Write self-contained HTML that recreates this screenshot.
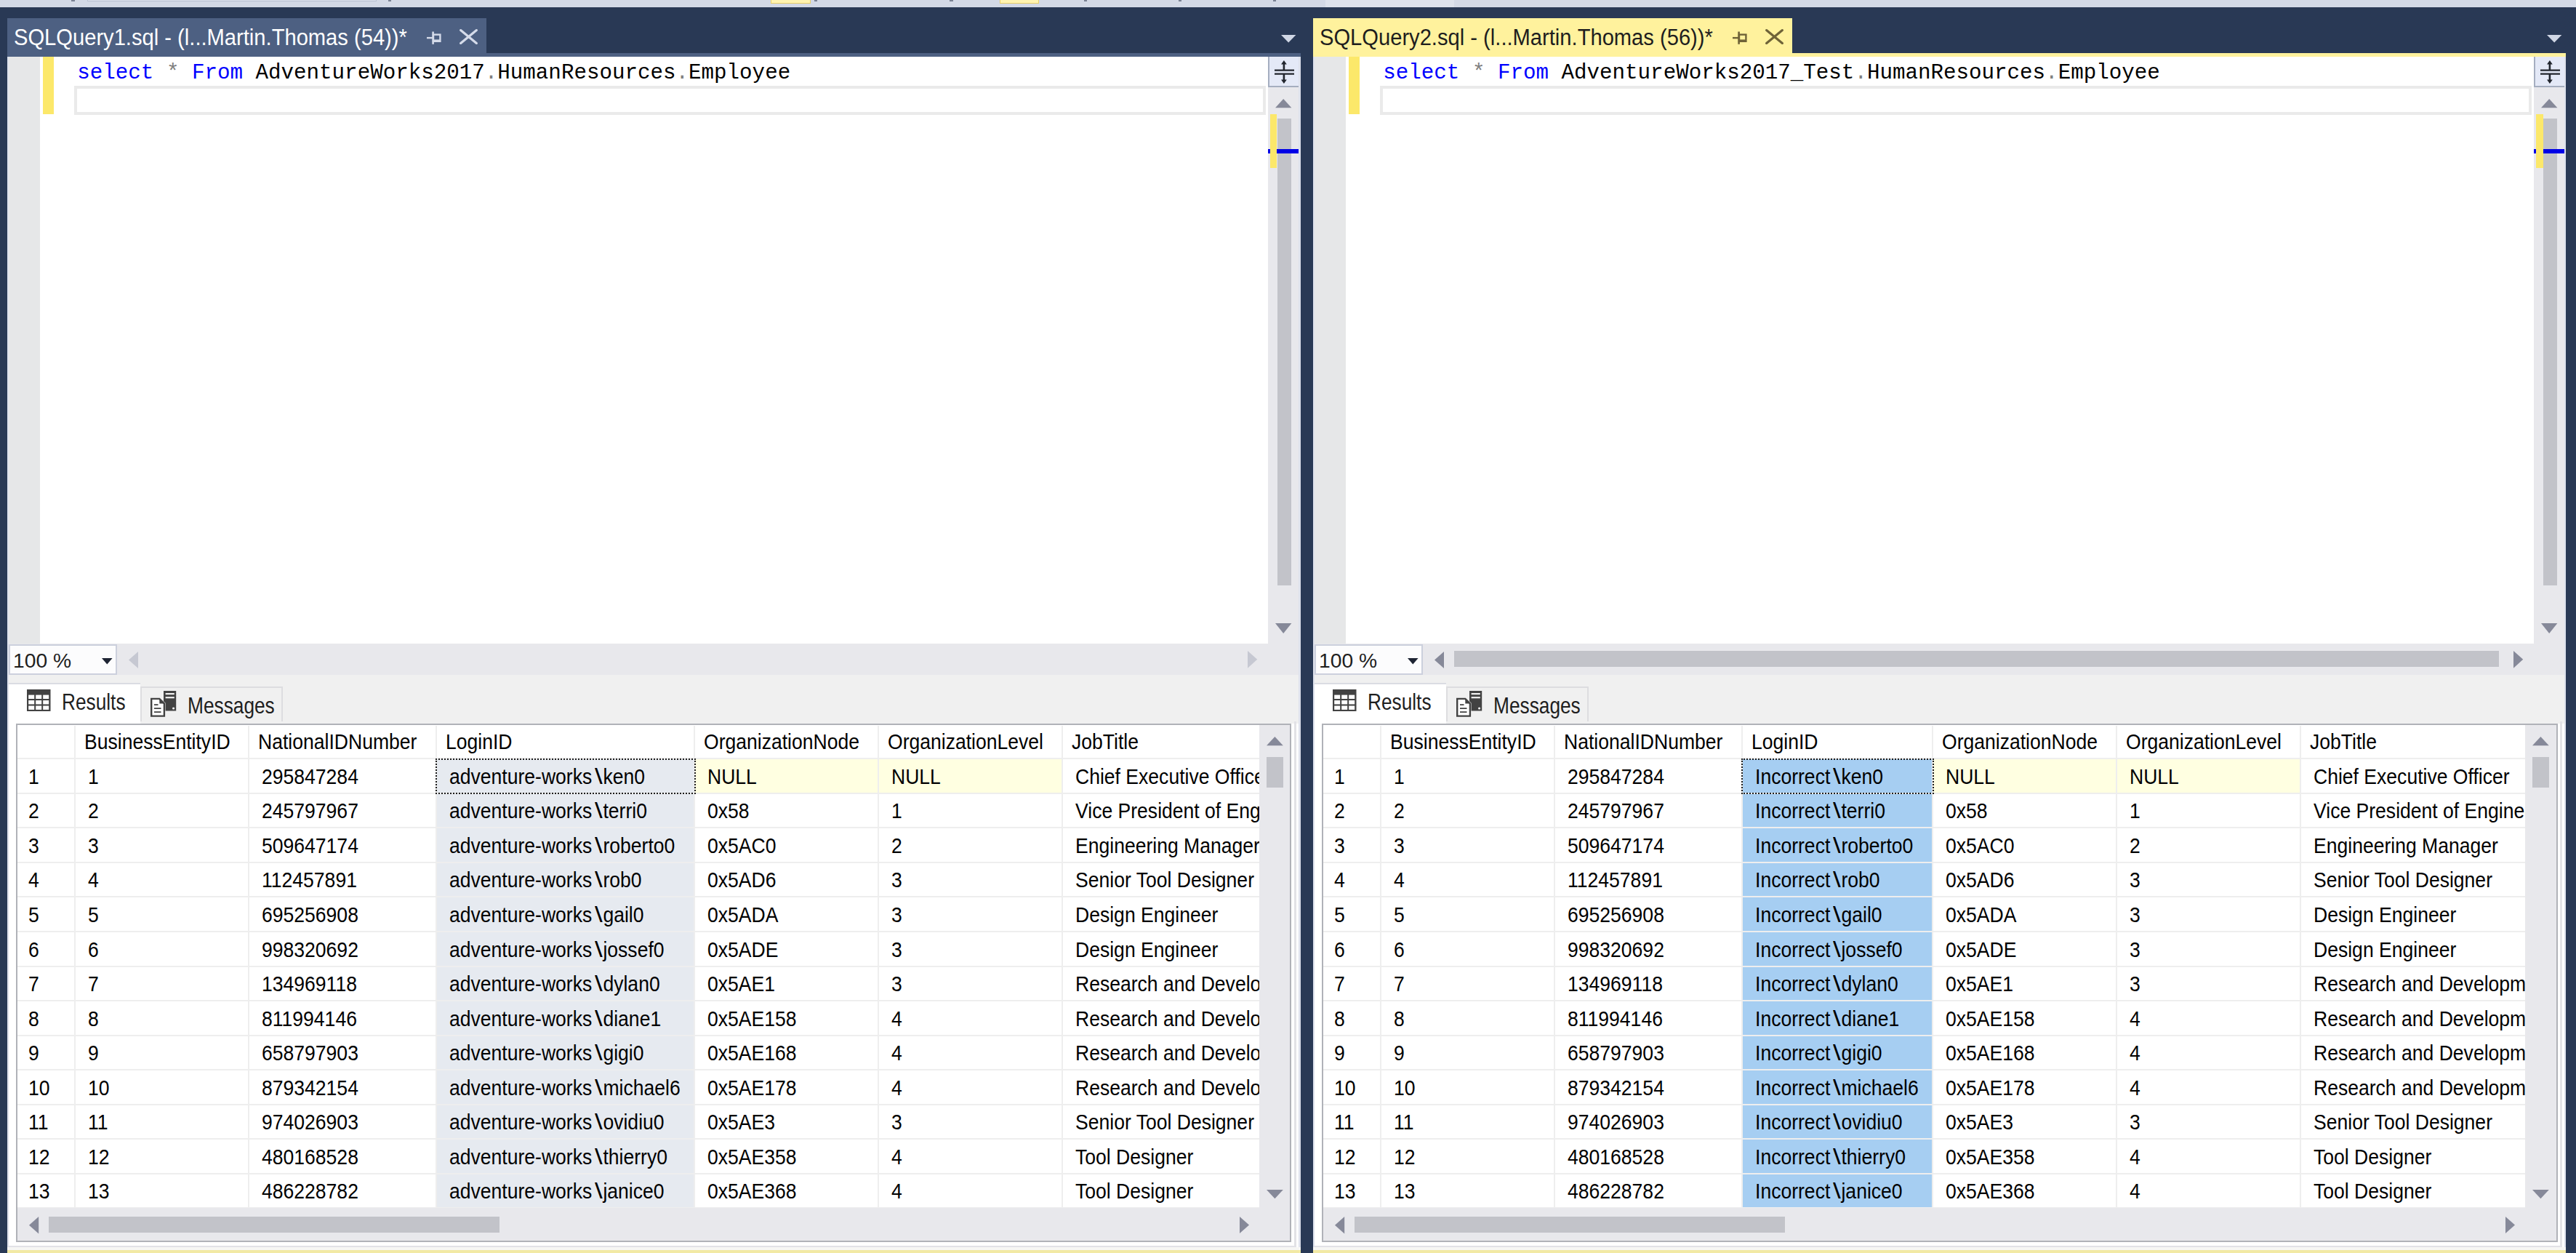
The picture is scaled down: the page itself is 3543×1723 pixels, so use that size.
<!DOCTYPE html>
<html><head><meta charset="utf-8"><title>SSMS</title>
<style>
html,body{margin:0;padding:0;width:3543px;height:1723px;overflow:hidden;background:#293955;}
body>div,body>svg,body div{position:absolute;}
body>svg{position:absolute;overflow:visible}
</style></head><body>

<div style="left:0.00px;top:0.00px;width:3543.00px;height:1723.00px;background:#293955;"></div>
<div style="left:0.00px;top:0.00px;width:3543.00px;height:10.40px;background:#D3D9E6;"></div>
<div style="left:120.00px;top:-2.00px;width:398.00px;height:3.80px;background:#DCE1EC;box-sizing:border-box;border:1.4px solid #B9C2D3;border-top:none;"></div>
<div style="left:1060.00px;top:-2.00px;width:54.50px;height:7.20px;background:#FFF3B0;box-sizing:border-box;border:1.8px solid #E8CF6A;border-top:none;"></div>
<div style="left:1374.60px;top:-2.00px;width:54.40px;height:7.20px;background:#FFF3B0;box-sizing:border-box;border:1.8px solid #E8CF6A;border-top:none;"></div>
<div style="left:1823.00px;top:0.00px;width:177.00px;height:10.40px;background:#DDE2EC;"></div>
<div style="left:98.30px;top:0.00px;width:4.40px;height:2.20px;background:#7A8294;"></div>
<div style="left:533.50px;top:0.00px;width:4.40px;height:2.20px;background:#7A8294;"></div>
<div style="left:1119.80px;top:0.00px;width:4.40px;height:2.20px;background:#7A8294;"></div>
<div style="left:1306.40px;top:0.00px;width:4.40px;height:2.20px;background:#7A8294;"></div>
<div style="left:1490.80px;top:0.00px;width:4.40px;height:2.20px;background:#7A8294;"></div>
<div style="left:1620.80px;top:0.00px;width:4.40px;height:2.20px;background:#7A8294;"></div>
<div style="left:1750.80px;top:0.00px;width:4.40px;height:2.20px;background:#7A8294;"></div>
<div style="left:10.00px;top:73.00px;width:1779.00px;height:1650.00px;background:#DDE1EC;"></div>
<div style="left:9.50px;top:25.40px;width:659.50px;height:47.60px;background:#4D6082;"></div>
<div style="left:10.00px;top:73.00px;width:1779.00px;height:5.00px;background:#4D6082;"></div>
<div style="left:19.00px;top:34.24px;font-family:'Liberation Sans',sans-serif;font-size:31px;line-height:35.65px;color:#FFFFFF;white-space:pre;transform:scaleX(0.94);transform-origin:0 0;">SQLQuery1.sql - (l...Martin.Thomas (54))*</div>
<svg style="left:586.50px;top:42.50px" width="22.00" height="19.00" viewBox="0 0 22.00 19.00"><path d="M0 9.1 H8" stroke="#D5DBEA" stroke-width="2.4"/><path d="M8.6 0.5 V17.8" stroke="#D5DBEA" stroke-width="2.6"/><rect x="9" y="4.6" width="9.4" height="9.2" fill="none" stroke="#D5DBEA" stroke-width="2.4"/><rect x="9" y="11.4" width="9.4" height="3.2" fill="#D5DBEA"/></svg>
<svg style="left:631.80px;top:39.80px" width="25.00" height="21.00" viewBox="0 0 25.00 21.00"><path d="M1.6 1.6 L23.4 19.4 M23.4 1.6 L1.6 19.4" stroke="#D5DBEA" stroke-width="3.2" stroke-linecap="round"/></svg>
<svg style="left:1761.70px;top:48.20px" width="20.40" height="10.40" viewBox="0 0 20.40 10.40"><polygon points="0,0 20.399999999999864,0 10.199999999999932,10.399999999999999" fill="#D0D7E5"/></svg>
<div style="left:12.00px;top:78.00px;width:1774.00px;height:807.30px;background:#FFFFFF;"></div>
<div style="left:12.00px;top:78.00px;width:42.50px;height:807.30px;background:#E6E7E8;"></div>
<div style="left:59.20px;top:78.00px;width:14.80px;height:79.20px;background:#FCE86A;"></div>
<div style="left:101.50px;top:117.50px;width:1639.20px;height:40.80px;background:transparent;box-sizing:border-box;border:4.8px solid #EAEAEA;"></div>
<div style="left:106.30px;top:83.68px;font-family:'Liberation Mono',monospace;font-size:29.2px;line-height:33.58px;color:#000;white-space:pre;"><span style="color:#0000FF">select</span> <span style="color:#808080">*</span> <span style="color:#0000FF">From</span> AdventureWorks2017<span style="color:#808080">.</span>HumanResources<span style="color:#808080">.</span>Employee</div>
<div style="left:1744.00px;top:78.00px;width:42.00px;height:807.30px;background:#E8E8EC;"></div>
<div style="left:1744.00px;top:78.00px;width:42.00px;height:42.00px;background:#E4E9F7;box-sizing:border-box;border-left:2.2px solid #A5AEC0;border-bottom:2.4px solid #A5AEC0;"></div>
<svg style="left:1752.00px;top:82.00px" width="30.00" height="34.00" viewBox="0 0 30.00 34.00"><path d="M1 14.6 H28 M1 19.6 H28" stroke="#22262E" stroke-width="2.4"/><path d="M13.9 4.5 V14.6 M13.9 19.6 V29" stroke="#22262E" stroke-width="2.6"/><polygon points="10,6.5 17.8,6.5 13.9,1" fill="#22262E"/><polygon points="10,27.5 17.8,27.5 13.9,33" fill="#22262E"/></svg>
<svg style="left:1754.00px;top:135.60px" width="22.40" height="12.30" viewBox="0 0 22.40 12.30"><polygon points="0,12.300000000000011 22.40000000000009,12.300000000000011 11.200000000000045,0" fill="#868999"/></svg>
<div style="left:1757.00px;top:162.80px;width:19.20px;height:642.60px;background:#C2C3C9;"></div>
<div style="left:1744.00px;top:205.30px;width:42.00px;height:5.70px;background:#0000E6;"></div>
<div style="left:1746.50px;top:157.30px;width:9.80px;height:73.70px;background:#FCE86A;"></div>
<svg style="left:1754.00px;top:857.20px" width="22.40" height="14.00" viewBox="0 0 22.40 14.00"><polygon points="0,0 22.40000000000009,0 11.200000000000045,14.0" fill="#868999"/></svg>
<div style="left:12.00px;top:885.30px;width:1774.00px;height:42.30px;background:#E8E8EC;"></div>
<div style="left:12.00px;top:886.00px;width:149.00px;height:41.70px;background:#FCFCFD;box-sizing:border-box;border:2.3px solid #CCD0DD;"></div>
<div style="left:17.50px;top:891.91px;font-family:'Liberation Sans',sans-serif;font-size:28.5px;line-height:32.77px;color:#1E1E1E;white-space:pre;transform:scaleX(0.99);transform-origin:0 0;">100 %</div>
<svg style="left:140.00px;top:904.80px" width="14.60" height="8.40" viewBox="0 0 14.60 8.40"><polygon points="0,0 14.599999999999994,0 7.299999999999997,8.400000000000091" fill="#1E2433"/></svg>
<svg style="left:177.00px;top:895.50px" width="13.00" height="23.00" viewBox="0 0 13.00 23.00"><polygon points="13,0 13,23.0 0,11.5" fill="#C6C8D2"/></svg>
<svg style="left:1716.00px;top:895.30px" width="13.20" height="23.70" viewBox="0 0 13.20 23.70"><polygon points="0,0 0,23.700000000000045 13.200000000000045,11.850000000000023" fill="#C6C8D2"/></svg>
<div style="left:12.00px;top:927.60px;width:1774.00px;height:67.40px;background:#F0F0F0;"></div>
<div style="left:12.00px;top:995.00px;width:1774.00px;height:720.00px;background:#FFFFFF;"></div>
<div style="left:12.00px;top:938.60px;width:180.50px;height:56.40px;background:#FFFFFF;box-sizing:border-box;border-top:2px solid #DADCE3;"></div>
<div style="left:192.50px;top:943.60px;width:196.50px;height:48.40px;background:#F0F0F0;box-sizing:border-box;border:2px solid #DDDDE0;border-bottom:none;"></div>
<svg style="left:37.00px;top:947.80px" width="32.50" height="30.00" viewBox="0 0 32.50 30.00"><rect x="0" y="0" width="32.5" height="30" fill="#424242"/><rect x="2.2" y="7.6" width="8" height="5.4" fill="#FFFFFF"/><rect x="12.2" y="7.6" width="8" height="5.4" fill="#FFFFFF"/><rect x="22.2" y="7.6" width="8" height="5.4" fill="#FFFFFF"/><rect x="2.2" y="15.05" width="8" height="5.4" fill="#FFFFFF"/><rect x="12.2" y="15.05" width="8" height="5.4" fill="#FFFFFF"/><rect x="22.2" y="15.05" width="8" height="5.4" fill="#FFFFFF"/><rect x="2.2" y="22.5" width="8" height="5.4" fill="#FFFFFF"/><rect x="12.2" y="22.5" width="8" height="5.4" fill="#FFFFFF"/><rect x="22.2" y="22.5" width="8" height="5.4" fill="#FFFFFF"/></svg>
<div style="left:85.00px;top:947.09px;font-family:'Liberation Sans',sans-serif;font-size:31.5px;line-height:36.22px;color:#1E1E1E;white-space:pre;transform:scaleX(0.833);transform-origin:0 0;">Results</div>
<svg style="left:206.80px;top:950.20px" width="36.00" height="36.00" viewBox="0 0 36.00 36.00"><rect x="18" y="0" width="17.2" height="27.5" fill="#424242"/><rect x="20.6" y="3" width="12.2" height="2.2" fill="#F0F0F0"/><rect x="20.6" y="8.1" width="12.2" height="2.2" fill="#F0F0F0"/><circle cx="31.6" cy="24" r="1.6" fill="#F0F0F0"/><path d="M-0.5 9.2 H13 L20.6 16.8 V36.3 H-0.5 Z" fill="#F0F0F0"/><path d="M1.2 10.9 H12.3 L18.9 17.5 V34.6 H1.2 Z" fill="#FFFFFF" stroke="#424242" stroke-width="2.4"/><path d="M12.3 10.9 V17.5 H18.9" fill="#424242"/><path d="M5 19.2 H10.5 M5 24.2 H14.5 M5 29.2 H14.5" stroke="#424242" stroke-width="1.8"/></svg>
<div style="left:257.80px;top:951.99px;font-family:'Liberation Sans',sans-serif;font-size:31.5px;line-height:36.22px;color:#1E1E1E;white-space:pre;transform:scaleX(0.834);transform-origin:0 0;">Messages</div>
<div style="left:1780.00px;top:992.00px;width:3.00px;height:723.00px;background:#E2E2E6;"></div>
<div style="left:12.00px;top:1712.60px;width:1771.00px;height:2.20px;background:#E2E2E6;"></div>
<div style="left:10.00px;top:1714.80px;width:1779.00px;height:3.90px;background:#F6F6F4;"></div>
<div style="left:10.00px;top:1718.70px;width:1779.00px;height:4.30px;background:#F2E9A4;"></div>
<div style="left:22.00px;top:995.40px;width:1754.40px;height:712.20px;background:#FFFFFF;"></div>
<div style="left:600.30px;top:1043.20px;width:354.70px;height:618.15px;background:#E6EAF0;"></div>
<div style="left:955.00px;top:1043.20px;width:505.90px;height:47.55px;background:#FFFFE1;"></div>
<div style="left:24.30px;top:1042.20px;width:1707.70px;height:2.00px;background:#EEEEEE;"></div>
<div style="left:24.30px;top:1089.75px;width:1707.70px;height:2.00px;background:#EEEEEE;"></div>
<div style="left:24.30px;top:1137.30px;width:1707.70px;height:2.00px;background:#EEEEEE;"></div>
<div style="left:24.30px;top:1184.85px;width:1707.70px;height:2.00px;background:#EEEEEE;"></div>
<div style="left:24.30px;top:1232.40px;width:1707.70px;height:2.00px;background:#EEEEEE;"></div>
<div style="left:24.30px;top:1279.95px;width:1707.70px;height:2.00px;background:#EEEEEE;"></div>
<div style="left:24.30px;top:1327.50px;width:1707.70px;height:2.00px;background:#EEEEEE;"></div>
<div style="left:24.30px;top:1375.05px;width:1707.70px;height:2.00px;background:#EEEEEE;"></div>
<div style="left:24.30px;top:1422.60px;width:1707.70px;height:2.00px;background:#EEEEEE;"></div>
<div style="left:24.30px;top:1470.15px;width:1707.70px;height:2.00px;background:#EEEEEE;"></div>
<div style="left:24.30px;top:1517.70px;width:1707.70px;height:2.00px;background:#EEEEEE;"></div>
<div style="left:24.30px;top:1565.25px;width:1707.70px;height:2.00px;background:#EEEEEE;"></div>
<div style="left:24.30px;top:1612.80px;width:1707.70px;height:2.00px;background:#EEEEEE;"></div>
<div style="left:24.30px;top:1660.35px;width:1707.70px;height:2.00px;background:#EEEEEE;"></div>
<div style="left:101.50px;top:997.70px;width:2.00px;height:663.65px;background:#EEEEEE;"></div>
<div style="left:341.00px;top:997.70px;width:2.00px;height:663.65px;background:#EEEEEE;"></div>
<div style="left:599.30px;top:997.70px;width:2.00px;height:663.65px;background:#EEEEEE;"></div>
<div style="left:954.00px;top:997.70px;width:2.00px;height:663.65px;background:#EEEEEE;"></div>
<div style="left:1206.60px;top:997.70px;width:2.00px;height:663.65px;background:#EEEEEE;"></div>
<div style="left:1459.90px;top:997.70px;width:2.00px;height:663.65px;background:#EEEEEE;"></div>
<div style="left:102.50px;top:997.70px;width:239.50px;height:663.65px;overflow:hidden"><div style="left:13.00px;top:5.65px;font-family:'Liberation Sans',sans-serif;font-size:30px;line-height:34px;color:#000;white-space:pre;transform:scaleX(0.885);transform-origin:0 0">BusinessEntityID</div></div>
<div style="left:342.00px;top:997.70px;width:258.30px;height:663.65px;overflow:hidden"><div style="left:13.00px;top:5.65px;font-family:'Liberation Sans',sans-serif;font-size:30px;line-height:34px;color:#000;white-space:pre;transform:scaleX(0.885);transform-origin:0 0">NationalIDNumber</div></div>
<div style="left:600.30px;top:997.70px;width:354.70px;height:663.65px;overflow:hidden"><div style="left:13.00px;top:5.65px;font-family:'Liberation Sans',sans-serif;font-size:30px;line-height:34px;color:#000;white-space:pre;transform:scaleX(0.885);transform-origin:0 0">LoginID</div></div>
<div style="left:955.00px;top:997.70px;width:252.60px;height:663.65px;overflow:hidden"><div style="left:13.00px;top:5.65px;font-family:'Liberation Sans',sans-serif;font-size:30px;line-height:34px;color:#000;white-space:pre;transform:scaleX(0.885);transform-origin:0 0">OrganizationNode</div></div>
<div style="left:1207.60px;top:997.70px;width:253.30px;height:663.65px;overflow:hidden"><div style="left:13.00px;top:5.65px;font-family:'Liberation Sans',sans-serif;font-size:30px;line-height:34px;color:#000;white-space:pre;transform:scaleX(0.885);transform-origin:0 0">OrganizationLevel</div></div>
<div style="left:1460.90px;top:997.70px;width:271.10px;height:663.65px;overflow:hidden"><div style="left:13.00px;top:5.65px;font-family:'Liberation Sans',sans-serif;font-size:30px;line-height:34px;color:#000;white-space:pre;transform:scaleX(0.885);transform-origin:0 0">JobTitle</div></div>
<div style="left:24.30px;top:997.70px;width:78.20px;height:663.65px;overflow:hidden"><div style="left:15.00px;top:53.15px;font-family:'Liberation Sans',sans-serif;font-size:30px;line-height:34px;color:#000;white-space:pre;transform:scaleX(0.885);transform-origin:0 0">1</div></div>
<div style="left:102.50px;top:997.70px;width:239.50px;height:663.65px;overflow:hidden"><div style="left:18.00px;top:53.15px;font-family:'Liberation Sans',sans-serif;font-size:30px;line-height:34px;color:#000;white-space:pre;transform:scaleX(0.885);transform-origin:0 0">1</div></div>
<div style="left:342.00px;top:997.70px;width:258.30px;height:663.65px;overflow:hidden"><div style="left:18.00px;top:53.15px;font-family:'Liberation Sans',sans-serif;font-size:30px;line-height:34px;color:#000;white-space:pre;transform:scaleX(0.885);transform-origin:0 0">295847284</div></div>
<div style="left:600.30px;top:997.70px;width:354.70px;height:663.65px;overflow:hidden"><div style="left:18.00px;top:53.15px;font-family:'Liberation Sans',sans-serif;font-size:30px;line-height:34px;color:#000;white-space:pre;transform:scaleX(0.885);transform-origin:0 0">adventure-works<span style="position:static;display:inline-block;margin:0 4.8px 0 4px;transform:scaleX(1.45);transform-origin:0 0">\</span>ken0</div></div>
<div style="left:955.00px;top:997.70px;width:252.60px;height:663.65px;overflow:hidden"><div style="left:18.00px;top:53.15px;font-family:'Liberation Sans',sans-serif;font-size:30px;line-height:34px;color:#000;white-space:pre;transform:scaleX(0.885);transform-origin:0 0">NULL</div></div>
<div style="left:1207.60px;top:997.70px;width:253.30px;height:663.65px;overflow:hidden"><div style="left:18.00px;top:53.15px;font-family:'Liberation Sans',sans-serif;font-size:30px;line-height:34px;color:#000;white-space:pre;transform:scaleX(0.885);transform-origin:0 0">NULL</div></div>
<div style="left:1460.90px;top:997.70px;width:271.10px;height:663.65px;overflow:hidden"><div style="left:18.00px;top:53.15px;font-family:'Liberation Sans',sans-serif;font-size:30px;line-height:34px;color:#000;white-space:pre;transform:scaleX(0.885);transform-origin:0 0">Chief Executive Officer</div></div>
<div style="left:24.30px;top:997.70px;width:78.20px;height:663.65px;overflow:hidden"><div style="left:15.00px;top:100.70px;font-family:'Liberation Sans',sans-serif;font-size:30px;line-height:34px;color:#000;white-space:pre;transform:scaleX(0.885);transform-origin:0 0">2</div></div>
<div style="left:102.50px;top:997.70px;width:239.50px;height:663.65px;overflow:hidden"><div style="left:18.00px;top:100.70px;font-family:'Liberation Sans',sans-serif;font-size:30px;line-height:34px;color:#000;white-space:pre;transform:scaleX(0.885);transform-origin:0 0">2</div></div>
<div style="left:342.00px;top:997.70px;width:258.30px;height:663.65px;overflow:hidden"><div style="left:18.00px;top:100.70px;font-family:'Liberation Sans',sans-serif;font-size:30px;line-height:34px;color:#000;white-space:pre;transform:scaleX(0.885);transform-origin:0 0">245797967</div></div>
<div style="left:600.30px;top:997.70px;width:354.70px;height:663.65px;overflow:hidden"><div style="left:18.00px;top:100.70px;font-family:'Liberation Sans',sans-serif;font-size:30px;line-height:34px;color:#000;white-space:pre;transform:scaleX(0.885);transform-origin:0 0">adventure-works<span style="position:static;display:inline-block;margin:0 4.8px 0 4px;transform:scaleX(1.45);transform-origin:0 0">\</span>terri0</div></div>
<div style="left:955.00px;top:997.70px;width:252.60px;height:663.65px;overflow:hidden"><div style="left:18.00px;top:100.70px;font-family:'Liberation Sans',sans-serif;font-size:30px;line-height:34px;color:#000;white-space:pre;transform:scaleX(0.885);transform-origin:0 0">0x58</div></div>
<div style="left:1207.60px;top:997.70px;width:253.30px;height:663.65px;overflow:hidden"><div style="left:18.00px;top:100.70px;font-family:'Liberation Sans',sans-serif;font-size:30px;line-height:34px;color:#000;white-space:pre;transform:scaleX(0.885);transform-origin:0 0">1</div></div>
<div style="left:1460.90px;top:997.70px;width:271.10px;height:663.65px;overflow:hidden"><div style="left:18.00px;top:100.70px;font-family:'Liberation Sans',sans-serif;font-size:30px;line-height:34px;color:#000;white-space:pre;transform:scaleX(0.885);transform-origin:0 0">Vice President of Engineering</div></div>
<div style="left:24.30px;top:997.70px;width:78.20px;height:663.65px;overflow:hidden"><div style="left:15.00px;top:148.25px;font-family:'Liberation Sans',sans-serif;font-size:30px;line-height:34px;color:#000;white-space:pre;transform:scaleX(0.885);transform-origin:0 0">3</div></div>
<div style="left:102.50px;top:997.70px;width:239.50px;height:663.65px;overflow:hidden"><div style="left:18.00px;top:148.25px;font-family:'Liberation Sans',sans-serif;font-size:30px;line-height:34px;color:#000;white-space:pre;transform:scaleX(0.885);transform-origin:0 0">3</div></div>
<div style="left:342.00px;top:997.70px;width:258.30px;height:663.65px;overflow:hidden"><div style="left:18.00px;top:148.25px;font-family:'Liberation Sans',sans-serif;font-size:30px;line-height:34px;color:#000;white-space:pre;transform:scaleX(0.885);transform-origin:0 0">509647174</div></div>
<div style="left:600.30px;top:997.70px;width:354.70px;height:663.65px;overflow:hidden"><div style="left:18.00px;top:148.25px;font-family:'Liberation Sans',sans-serif;font-size:30px;line-height:34px;color:#000;white-space:pre;transform:scaleX(0.885);transform-origin:0 0">adventure-works<span style="position:static;display:inline-block;margin:0 4.8px 0 4px;transform:scaleX(1.45);transform-origin:0 0">\</span>roberto0</div></div>
<div style="left:955.00px;top:997.70px;width:252.60px;height:663.65px;overflow:hidden"><div style="left:18.00px;top:148.25px;font-family:'Liberation Sans',sans-serif;font-size:30px;line-height:34px;color:#000;white-space:pre;transform:scaleX(0.885);transform-origin:0 0">0x5AC0</div></div>
<div style="left:1207.60px;top:997.70px;width:253.30px;height:663.65px;overflow:hidden"><div style="left:18.00px;top:148.25px;font-family:'Liberation Sans',sans-serif;font-size:30px;line-height:34px;color:#000;white-space:pre;transform:scaleX(0.885);transform-origin:0 0">2</div></div>
<div style="left:1460.90px;top:997.70px;width:271.10px;height:663.65px;overflow:hidden"><div style="left:18.00px;top:148.25px;font-family:'Liberation Sans',sans-serif;font-size:30px;line-height:34px;color:#000;white-space:pre;transform:scaleX(0.885);transform-origin:0 0">Engineering Manager</div></div>
<div style="left:24.30px;top:997.70px;width:78.20px;height:663.65px;overflow:hidden"><div style="left:15.00px;top:195.80px;font-family:'Liberation Sans',sans-serif;font-size:30px;line-height:34px;color:#000;white-space:pre;transform:scaleX(0.885);transform-origin:0 0">4</div></div>
<div style="left:102.50px;top:997.70px;width:239.50px;height:663.65px;overflow:hidden"><div style="left:18.00px;top:195.80px;font-family:'Liberation Sans',sans-serif;font-size:30px;line-height:34px;color:#000;white-space:pre;transform:scaleX(0.885);transform-origin:0 0">4</div></div>
<div style="left:342.00px;top:997.70px;width:258.30px;height:663.65px;overflow:hidden"><div style="left:18.00px;top:195.80px;font-family:'Liberation Sans',sans-serif;font-size:30px;line-height:34px;color:#000;white-space:pre;transform:scaleX(0.885);transform-origin:0 0">112457891</div></div>
<div style="left:600.30px;top:997.70px;width:354.70px;height:663.65px;overflow:hidden"><div style="left:18.00px;top:195.80px;font-family:'Liberation Sans',sans-serif;font-size:30px;line-height:34px;color:#000;white-space:pre;transform:scaleX(0.885);transform-origin:0 0">adventure-works<span style="position:static;display:inline-block;margin:0 4.8px 0 4px;transform:scaleX(1.45);transform-origin:0 0">\</span>rob0</div></div>
<div style="left:955.00px;top:997.70px;width:252.60px;height:663.65px;overflow:hidden"><div style="left:18.00px;top:195.80px;font-family:'Liberation Sans',sans-serif;font-size:30px;line-height:34px;color:#000;white-space:pre;transform:scaleX(0.885);transform-origin:0 0">0x5AD6</div></div>
<div style="left:1207.60px;top:997.70px;width:253.30px;height:663.65px;overflow:hidden"><div style="left:18.00px;top:195.80px;font-family:'Liberation Sans',sans-serif;font-size:30px;line-height:34px;color:#000;white-space:pre;transform:scaleX(0.885);transform-origin:0 0">3</div></div>
<div style="left:1460.90px;top:997.70px;width:271.10px;height:663.65px;overflow:hidden"><div style="left:18.00px;top:195.80px;font-family:'Liberation Sans',sans-serif;font-size:30px;line-height:34px;color:#000;white-space:pre;transform:scaleX(0.885);transform-origin:0 0">Senior Tool Designer</div></div>
<div style="left:24.30px;top:997.70px;width:78.20px;height:663.65px;overflow:hidden"><div style="left:15.00px;top:243.35px;font-family:'Liberation Sans',sans-serif;font-size:30px;line-height:34px;color:#000;white-space:pre;transform:scaleX(0.885);transform-origin:0 0">5</div></div>
<div style="left:102.50px;top:997.70px;width:239.50px;height:663.65px;overflow:hidden"><div style="left:18.00px;top:243.35px;font-family:'Liberation Sans',sans-serif;font-size:30px;line-height:34px;color:#000;white-space:pre;transform:scaleX(0.885);transform-origin:0 0">5</div></div>
<div style="left:342.00px;top:997.70px;width:258.30px;height:663.65px;overflow:hidden"><div style="left:18.00px;top:243.35px;font-family:'Liberation Sans',sans-serif;font-size:30px;line-height:34px;color:#000;white-space:pre;transform:scaleX(0.885);transform-origin:0 0">695256908</div></div>
<div style="left:600.30px;top:997.70px;width:354.70px;height:663.65px;overflow:hidden"><div style="left:18.00px;top:243.35px;font-family:'Liberation Sans',sans-serif;font-size:30px;line-height:34px;color:#000;white-space:pre;transform:scaleX(0.885);transform-origin:0 0">adventure-works<span style="position:static;display:inline-block;margin:0 4.8px 0 4px;transform:scaleX(1.45);transform-origin:0 0">\</span>gail0</div></div>
<div style="left:955.00px;top:997.70px;width:252.60px;height:663.65px;overflow:hidden"><div style="left:18.00px;top:243.35px;font-family:'Liberation Sans',sans-serif;font-size:30px;line-height:34px;color:#000;white-space:pre;transform:scaleX(0.885);transform-origin:0 0">0x5ADA</div></div>
<div style="left:1207.60px;top:997.70px;width:253.30px;height:663.65px;overflow:hidden"><div style="left:18.00px;top:243.35px;font-family:'Liberation Sans',sans-serif;font-size:30px;line-height:34px;color:#000;white-space:pre;transform:scaleX(0.885);transform-origin:0 0">3</div></div>
<div style="left:1460.90px;top:997.70px;width:271.10px;height:663.65px;overflow:hidden"><div style="left:18.00px;top:243.35px;font-family:'Liberation Sans',sans-serif;font-size:30px;line-height:34px;color:#000;white-space:pre;transform:scaleX(0.885);transform-origin:0 0">Design Engineer</div></div>
<div style="left:24.30px;top:997.70px;width:78.20px;height:663.65px;overflow:hidden"><div style="left:15.00px;top:290.90px;font-family:'Liberation Sans',sans-serif;font-size:30px;line-height:34px;color:#000;white-space:pre;transform:scaleX(0.885);transform-origin:0 0">6</div></div>
<div style="left:102.50px;top:997.70px;width:239.50px;height:663.65px;overflow:hidden"><div style="left:18.00px;top:290.90px;font-family:'Liberation Sans',sans-serif;font-size:30px;line-height:34px;color:#000;white-space:pre;transform:scaleX(0.885);transform-origin:0 0">6</div></div>
<div style="left:342.00px;top:997.70px;width:258.30px;height:663.65px;overflow:hidden"><div style="left:18.00px;top:290.90px;font-family:'Liberation Sans',sans-serif;font-size:30px;line-height:34px;color:#000;white-space:pre;transform:scaleX(0.885);transform-origin:0 0">998320692</div></div>
<div style="left:600.30px;top:997.70px;width:354.70px;height:663.65px;overflow:hidden"><div style="left:18.00px;top:290.90px;font-family:'Liberation Sans',sans-serif;font-size:30px;line-height:34px;color:#000;white-space:pre;transform:scaleX(0.885);transform-origin:0 0">adventure-works<span style="position:static;display:inline-block;margin:0 4.8px 0 4px;transform:scaleX(1.45);transform-origin:0 0">\</span>jossef0</div></div>
<div style="left:955.00px;top:997.70px;width:252.60px;height:663.65px;overflow:hidden"><div style="left:18.00px;top:290.90px;font-family:'Liberation Sans',sans-serif;font-size:30px;line-height:34px;color:#000;white-space:pre;transform:scaleX(0.885);transform-origin:0 0">0x5ADE</div></div>
<div style="left:1207.60px;top:997.70px;width:253.30px;height:663.65px;overflow:hidden"><div style="left:18.00px;top:290.90px;font-family:'Liberation Sans',sans-serif;font-size:30px;line-height:34px;color:#000;white-space:pre;transform:scaleX(0.885);transform-origin:0 0">3</div></div>
<div style="left:1460.90px;top:997.70px;width:271.10px;height:663.65px;overflow:hidden"><div style="left:18.00px;top:290.90px;font-family:'Liberation Sans',sans-serif;font-size:30px;line-height:34px;color:#000;white-space:pre;transform:scaleX(0.885);transform-origin:0 0">Design Engineer</div></div>
<div style="left:24.30px;top:997.70px;width:78.20px;height:663.65px;overflow:hidden"><div style="left:15.00px;top:338.45px;font-family:'Liberation Sans',sans-serif;font-size:30px;line-height:34px;color:#000;white-space:pre;transform:scaleX(0.885);transform-origin:0 0">7</div></div>
<div style="left:102.50px;top:997.70px;width:239.50px;height:663.65px;overflow:hidden"><div style="left:18.00px;top:338.45px;font-family:'Liberation Sans',sans-serif;font-size:30px;line-height:34px;color:#000;white-space:pre;transform:scaleX(0.885);transform-origin:0 0">7</div></div>
<div style="left:342.00px;top:997.70px;width:258.30px;height:663.65px;overflow:hidden"><div style="left:18.00px;top:338.45px;font-family:'Liberation Sans',sans-serif;font-size:30px;line-height:34px;color:#000;white-space:pre;transform:scaleX(0.885);transform-origin:0 0">134969118</div></div>
<div style="left:600.30px;top:997.70px;width:354.70px;height:663.65px;overflow:hidden"><div style="left:18.00px;top:338.45px;font-family:'Liberation Sans',sans-serif;font-size:30px;line-height:34px;color:#000;white-space:pre;transform:scaleX(0.885);transform-origin:0 0">adventure-works<span style="position:static;display:inline-block;margin:0 4.8px 0 4px;transform:scaleX(1.45);transform-origin:0 0">\</span>dylan0</div></div>
<div style="left:955.00px;top:997.70px;width:252.60px;height:663.65px;overflow:hidden"><div style="left:18.00px;top:338.45px;font-family:'Liberation Sans',sans-serif;font-size:30px;line-height:34px;color:#000;white-space:pre;transform:scaleX(0.885);transform-origin:0 0">0x5AE1</div></div>
<div style="left:1207.60px;top:997.70px;width:253.30px;height:663.65px;overflow:hidden"><div style="left:18.00px;top:338.45px;font-family:'Liberation Sans',sans-serif;font-size:30px;line-height:34px;color:#000;white-space:pre;transform:scaleX(0.885);transform-origin:0 0">3</div></div>
<div style="left:1460.90px;top:997.70px;width:271.10px;height:663.65px;overflow:hidden"><div style="left:18.00px;top:338.45px;font-family:'Liberation Sans',sans-serif;font-size:30px;line-height:34px;color:#000;white-space:pre;transform:scaleX(0.885);transform-origin:0 0">Research and Development Manager</div></div>
<div style="left:24.30px;top:997.70px;width:78.20px;height:663.65px;overflow:hidden"><div style="left:15.00px;top:386.00px;font-family:'Liberation Sans',sans-serif;font-size:30px;line-height:34px;color:#000;white-space:pre;transform:scaleX(0.885);transform-origin:0 0">8</div></div>
<div style="left:102.50px;top:997.70px;width:239.50px;height:663.65px;overflow:hidden"><div style="left:18.00px;top:386.00px;font-family:'Liberation Sans',sans-serif;font-size:30px;line-height:34px;color:#000;white-space:pre;transform:scaleX(0.885);transform-origin:0 0">8</div></div>
<div style="left:342.00px;top:997.70px;width:258.30px;height:663.65px;overflow:hidden"><div style="left:18.00px;top:386.00px;font-family:'Liberation Sans',sans-serif;font-size:30px;line-height:34px;color:#000;white-space:pre;transform:scaleX(0.885);transform-origin:0 0">811994146</div></div>
<div style="left:600.30px;top:997.70px;width:354.70px;height:663.65px;overflow:hidden"><div style="left:18.00px;top:386.00px;font-family:'Liberation Sans',sans-serif;font-size:30px;line-height:34px;color:#000;white-space:pre;transform:scaleX(0.885);transform-origin:0 0">adventure-works<span style="position:static;display:inline-block;margin:0 4.8px 0 4px;transform:scaleX(1.45);transform-origin:0 0">\</span>diane1</div></div>
<div style="left:955.00px;top:997.70px;width:252.60px;height:663.65px;overflow:hidden"><div style="left:18.00px;top:386.00px;font-family:'Liberation Sans',sans-serif;font-size:30px;line-height:34px;color:#000;white-space:pre;transform:scaleX(0.885);transform-origin:0 0">0x5AE158</div></div>
<div style="left:1207.60px;top:997.70px;width:253.30px;height:663.65px;overflow:hidden"><div style="left:18.00px;top:386.00px;font-family:'Liberation Sans',sans-serif;font-size:30px;line-height:34px;color:#000;white-space:pre;transform:scaleX(0.885);transform-origin:0 0">4</div></div>
<div style="left:1460.90px;top:997.70px;width:271.10px;height:663.65px;overflow:hidden"><div style="left:18.00px;top:386.00px;font-family:'Liberation Sans',sans-serif;font-size:30px;line-height:34px;color:#000;white-space:pre;transform:scaleX(0.885);transform-origin:0 0">Research and Development Engineer</div></div>
<div style="left:24.30px;top:997.70px;width:78.20px;height:663.65px;overflow:hidden"><div style="left:15.00px;top:433.55px;font-family:'Liberation Sans',sans-serif;font-size:30px;line-height:34px;color:#000;white-space:pre;transform:scaleX(0.885);transform-origin:0 0">9</div></div>
<div style="left:102.50px;top:997.70px;width:239.50px;height:663.65px;overflow:hidden"><div style="left:18.00px;top:433.55px;font-family:'Liberation Sans',sans-serif;font-size:30px;line-height:34px;color:#000;white-space:pre;transform:scaleX(0.885);transform-origin:0 0">9</div></div>
<div style="left:342.00px;top:997.70px;width:258.30px;height:663.65px;overflow:hidden"><div style="left:18.00px;top:433.55px;font-family:'Liberation Sans',sans-serif;font-size:30px;line-height:34px;color:#000;white-space:pre;transform:scaleX(0.885);transform-origin:0 0">658797903</div></div>
<div style="left:600.30px;top:997.70px;width:354.70px;height:663.65px;overflow:hidden"><div style="left:18.00px;top:433.55px;font-family:'Liberation Sans',sans-serif;font-size:30px;line-height:34px;color:#000;white-space:pre;transform:scaleX(0.885);transform-origin:0 0">adventure-works<span style="position:static;display:inline-block;margin:0 4.8px 0 4px;transform:scaleX(1.45);transform-origin:0 0">\</span>gigi0</div></div>
<div style="left:955.00px;top:997.70px;width:252.60px;height:663.65px;overflow:hidden"><div style="left:18.00px;top:433.55px;font-family:'Liberation Sans',sans-serif;font-size:30px;line-height:34px;color:#000;white-space:pre;transform:scaleX(0.885);transform-origin:0 0">0x5AE168</div></div>
<div style="left:1207.60px;top:997.70px;width:253.30px;height:663.65px;overflow:hidden"><div style="left:18.00px;top:433.55px;font-family:'Liberation Sans',sans-serif;font-size:30px;line-height:34px;color:#000;white-space:pre;transform:scaleX(0.885);transform-origin:0 0">4</div></div>
<div style="left:1460.90px;top:997.70px;width:271.10px;height:663.65px;overflow:hidden"><div style="left:18.00px;top:433.55px;font-family:'Liberation Sans',sans-serif;font-size:30px;line-height:34px;color:#000;white-space:pre;transform:scaleX(0.885);transform-origin:0 0">Research and Development Engineer</div></div>
<div style="left:24.30px;top:997.70px;width:78.20px;height:663.65px;overflow:hidden"><div style="left:15.00px;top:481.10px;font-family:'Liberation Sans',sans-serif;font-size:30px;line-height:34px;color:#000;white-space:pre;transform:scaleX(0.885);transform-origin:0 0">10</div></div>
<div style="left:102.50px;top:997.70px;width:239.50px;height:663.65px;overflow:hidden"><div style="left:18.00px;top:481.10px;font-family:'Liberation Sans',sans-serif;font-size:30px;line-height:34px;color:#000;white-space:pre;transform:scaleX(0.885);transform-origin:0 0">10</div></div>
<div style="left:342.00px;top:997.70px;width:258.30px;height:663.65px;overflow:hidden"><div style="left:18.00px;top:481.10px;font-family:'Liberation Sans',sans-serif;font-size:30px;line-height:34px;color:#000;white-space:pre;transform:scaleX(0.885);transform-origin:0 0">879342154</div></div>
<div style="left:600.30px;top:997.70px;width:354.70px;height:663.65px;overflow:hidden"><div style="left:18.00px;top:481.10px;font-family:'Liberation Sans',sans-serif;font-size:30px;line-height:34px;color:#000;white-space:pre;transform:scaleX(0.885);transform-origin:0 0">adventure-works<span style="position:static;display:inline-block;margin:0 4.8px 0 4px;transform:scaleX(1.45);transform-origin:0 0">\</span>michael6</div></div>
<div style="left:955.00px;top:997.70px;width:252.60px;height:663.65px;overflow:hidden"><div style="left:18.00px;top:481.10px;font-family:'Liberation Sans',sans-serif;font-size:30px;line-height:34px;color:#000;white-space:pre;transform:scaleX(0.885);transform-origin:0 0">0x5AE178</div></div>
<div style="left:1207.60px;top:997.70px;width:253.30px;height:663.65px;overflow:hidden"><div style="left:18.00px;top:481.10px;font-family:'Liberation Sans',sans-serif;font-size:30px;line-height:34px;color:#000;white-space:pre;transform:scaleX(0.885);transform-origin:0 0">4</div></div>
<div style="left:1460.90px;top:997.70px;width:271.10px;height:663.65px;overflow:hidden"><div style="left:18.00px;top:481.10px;font-family:'Liberation Sans',sans-serif;font-size:30px;line-height:34px;color:#000;white-space:pre;transform:scaleX(0.885);transform-origin:0 0">Research and Development Manager</div></div>
<div style="left:24.30px;top:997.70px;width:78.20px;height:663.65px;overflow:hidden"><div style="left:15.00px;top:528.65px;font-family:'Liberation Sans',sans-serif;font-size:30px;line-height:34px;color:#000;white-space:pre;transform:scaleX(0.885);transform-origin:0 0">11</div></div>
<div style="left:102.50px;top:997.70px;width:239.50px;height:663.65px;overflow:hidden"><div style="left:18.00px;top:528.65px;font-family:'Liberation Sans',sans-serif;font-size:30px;line-height:34px;color:#000;white-space:pre;transform:scaleX(0.885);transform-origin:0 0">11</div></div>
<div style="left:342.00px;top:997.70px;width:258.30px;height:663.65px;overflow:hidden"><div style="left:18.00px;top:528.65px;font-family:'Liberation Sans',sans-serif;font-size:30px;line-height:34px;color:#000;white-space:pre;transform:scaleX(0.885);transform-origin:0 0">974026903</div></div>
<div style="left:600.30px;top:997.70px;width:354.70px;height:663.65px;overflow:hidden"><div style="left:18.00px;top:528.65px;font-family:'Liberation Sans',sans-serif;font-size:30px;line-height:34px;color:#000;white-space:pre;transform:scaleX(0.885);transform-origin:0 0">adventure-works<span style="position:static;display:inline-block;margin:0 4.8px 0 4px;transform:scaleX(1.45);transform-origin:0 0">\</span>ovidiu0</div></div>
<div style="left:955.00px;top:997.70px;width:252.60px;height:663.65px;overflow:hidden"><div style="left:18.00px;top:528.65px;font-family:'Liberation Sans',sans-serif;font-size:30px;line-height:34px;color:#000;white-space:pre;transform:scaleX(0.885);transform-origin:0 0">0x5AE3</div></div>
<div style="left:1207.60px;top:997.70px;width:253.30px;height:663.65px;overflow:hidden"><div style="left:18.00px;top:528.65px;font-family:'Liberation Sans',sans-serif;font-size:30px;line-height:34px;color:#000;white-space:pre;transform:scaleX(0.885);transform-origin:0 0">3</div></div>
<div style="left:1460.90px;top:997.70px;width:271.10px;height:663.65px;overflow:hidden"><div style="left:18.00px;top:528.65px;font-family:'Liberation Sans',sans-serif;font-size:30px;line-height:34px;color:#000;white-space:pre;transform:scaleX(0.885);transform-origin:0 0">Senior Tool Designer</div></div>
<div style="left:24.30px;top:997.70px;width:78.20px;height:663.65px;overflow:hidden"><div style="left:15.00px;top:576.20px;font-family:'Liberation Sans',sans-serif;font-size:30px;line-height:34px;color:#000;white-space:pre;transform:scaleX(0.885);transform-origin:0 0">12</div></div>
<div style="left:102.50px;top:997.70px;width:239.50px;height:663.65px;overflow:hidden"><div style="left:18.00px;top:576.20px;font-family:'Liberation Sans',sans-serif;font-size:30px;line-height:34px;color:#000;white-space:pre;transform:scaleX(0.885);transform-origin:0 0">12</div></div>
<div style="left:342.00px;top:997.70px;width:258.30px;height:663.65px;overflow:hidden"><div style="left:18.00px;top:576.20px;font-family:'Liberation Sans',sans-serif;font-size:30px;line-height:34px;color:#000;white-space:pre;transform:scaleX(0.885);transform-origin:0 0">480168528</div></div>
<div style="left:600.30px;top:997.70px;width:354.70px;height:663.65px;overflow:hidden"><div style="left:18.00px;top:576.20px;font-family:'Liberation Sans',sans-serif;font-size:30px;line-height:34px;color:#000;white-space:pre;transform:scaleX(0.885);transform-origin:0 0">adventure-works<span style="position:static;display:inline-block;margin:0 4.8px 0 4px;transform:scaleX(1.45);transform-origin:0 0">\</span>thierry0</div></div>
<div style="left:955.00px;top:997.70px;width:252.60px;height:663.65px;overflow:hidden"><div style="left:18.00px;top:576.20px;font-family:'Liberation Sans',sans-serif;font-size:30px;line-height:34px;color:#000;white-space:pre;transform:scaleX(0.885);transform-origin:0 0">0x5AE358</div></div>
<div style="left:1207.60px;top:997.70px;width:253.30px;height:663.65px;overflow:hidden"><div style="left:18.00px;top:576.20px;font-family:'Liberation Sans',sans-serif;font-size:30px;line-height:34px;color:#000;white-space:pre;transform:scaleX(0.885);transform-origin:0 0">4</div></div>
<div style="left:1460.90px;top:997.70px;width:271.10px;height:663.65px;overflow:hidden"><div style="left:18.00px;top:576.20px;font-family:'Liberation Sans',sans-serif;font-size:30px;line-height:34px;color:#000;white-space:pre;transform:scaleX(0.885);transform-origin:0 0">Tool Designer</div></div>
<div style="left:24.30px;top:997.70px;width:78.20px;height:663.65px;overflow:hidden"><div style="left:15.00px;top:623.75px;font-family:'Liberation Sans',sans-serif;font-size:30px;line-height:34px;color:#000;white-space:pre;transform:scaleX(0.885);transform-origin:0 0">13</div></div>
<div style="left:102.50px;top:997.70px;width:239.50px;height:663.65px;overflow:hidden"><div style="left:18.00px;top:623.75px;font-family:'Liberation Sans',sans-serif;font-size:30px;line-height:34px;color:#000;white-space:pre;transform:scaleX(0.885);transform-origin:0 0">13</div></div>
<div style="left:342.00px;top:997.70px;width:258.30px;height:663.65px;overflow:hidden"><div style="left:18.00px;top:623.75px;font-family:'Liberation Sans',sans-serif;font-size:30px;line-height:34px;color:#000;white-space:pre;transform:scaleX(0.885);transform-origin:0 0">486228782</div></div>
<div style="left:600.30px;top:997.70px;width:354.70px;height:663.65px;overflow:hidden"><div style="left:18.00px;top:623.75px;font-family:'Liberation Sans',sans-serif;font-size:30px;line-height:34px;color:#000;white-space:pre;transform:scaleX(0.885);transform-origin:0 0">adventure-works<span style="position:static;display:inline-block;margin:0 4.8px 0 4px;transform:scaleX(1.45);transform-origin:0 0">\</span>janice0</div></div>
<div style="left:955.00px;top:997.70px;width:252.60px;height:663.65px;overflow:hidden"><div style="left:18.00px;top:623.75px;font-family:'Liberation Sans',sans-serif;font-size:30px;line-height:34px;color:#000;white-space:pre;transform:scaleX(0.885);transform-origin:0 0">0x5AE368</div></div>
<div style="left:1207.60px;top:997.70px;width:253.30px;height:663.65px;overflow:hidden"><div style="left:18.00px;top:623.75px;font-family:'Liberation Sans',sans-serif;font-size:30px;line-height:34px;color:#000;white-space:pre;transform:scaleX(0.885);transform-origin:0 0">4</div></div>
<div style="left:1460.90px;top:997.70px;width:271.10px;height:663.65px;overflow:hidden"><div style="left:18.00px;top:623.75px;font-family:'Liberation Sans',sans-serif;font-size:30px;line-height:34px;color:#000;white-space:pre;transform:scaleX(0.885);transform-origin:0 0">Tool Designer</div></div>
<div style="left:598.90px;top:1043.00px;width:357.70px;height:48.95px;background:transparent;box-sizing:border-box;border:2.5px dotted #1E1E1E;"></div>
<div style="left:1732.00px;top:995.40px;width:44.40px;height:712.20px;background:#E8E8EC;"></div>
<svg style="left:1742.00px;top:1012.70px" width="22.80" height="12.30" viewBox="0 0 22.80 12.30"><polygon points="0,12.299999999999955 22.799999999999955,12.299999999999955 11.399999999999977,0" fill="#868999"/></svg>
<div style="left:1742.00px;top:1040.70px;width:23.00px;height:41.90px;background:#C2C3C9;"></div>
<svg style="left:1742.00px;top:1635.50px" width="22.80" height="12.30" viewBox="0 0 22.80 12.30"><polygon points="0,0 22.799999999999955,0 11.399999999999977,12.299999999999955" fill="#868999"/></svg>
<div style="left:22.00px;top:1661.35px;width:1710.00px;height:46.25px;background:#E8E8EC;"></div>
<svg style="left:39.60px;top:1672.60px" width="13.20" height="23.40" viewBox="0 0 13.20 23.40"><polygon points="13.199999999999996,0 13.199999999999996,23.40000000000009 0,11.700000000000045" fill="#868999"/></svg>
<div style="left:66.50px;top:1673.00px;width:620.00px;height:22.30px;background:#C2C3C9;"></div>
<svg style="left:1704.50px;top:1672.50px" width="13.00" height="23.00" viewBox="0 0 13.00 23.00"><polygon points="0,0 0,23.0 13.0,11.5" fill="#868999"/></svg>
<div style="left:22.00px;top:995.40px;width:1754.40px;height:712.20px;background:transparent;box-sizing:border-box;border:2.3px solid #B0B2B8;"></div>
<div style="left:1806.00px;top:73.00px;width:1723.20px;height:1650.00px;background:#DDE1EC;"></div>
<div style="left:1805.50px;top:25.40px;width:659.50px;height:47.60px;background:#FFF29D;"></div>
<div style="left:1806.00px;top:73.00px;width:1723.20px;height:5.00px;background:#FFF29D;"></div>
<div style="left:1815.00px;top:34.24px;font-family:'Liberation Sans',sans-serif;font-size:31px;line-height:35.65px;color:#1E1E1E;white-space:pre;transform:scaleX(0.94);transform-origin:0 0;">SQLQuery2.sql - (l...Martin.Thomas (56))*</div>
<svg style="left:2382.50px;top:42.50px" width="22.00" height="19.00" viewBox="0 0 22.00 19.00"><path d="M0 9.1 H8" stroke="#6F6338" stroke-width="2.4"/><path d="M8.6 0.5 V17.8" stroke="#6F6338" stroke-width="2.6"/><rect x="9" y="4.6" width="9.4" height="9.2" fill="none" stroke="#6F6338" stroke-width="2.4"/><rect x="9" y="11.4" width="9.4" height="3.2" fill="#6F6338"/></svg>
<svg style="left:2427.80px;top:39.80px" width="25.00" height="21.00" viewBox="0 0 25.00 21.00"><path d="M1.6 1.6 L23.4 19.4 M23.4 1.6 L1.6 19.4" stroke="#6F6338" stroke-width="3.2" stroke-linecap="round"/></svg>
<svg style="left:3503.00px;top:48.20px" width="20.40" height="10.40" viewBox="0 0 20.40 10.40"><polygon points="0,0 20.40000000000009,0 10.200000000000045,10.399999999999999" fill="#D0D7E5"/></svg>
<div style="left:1808.00px;top:78.00px;width:1719.30px;height:807.30px;background:#FFFFFF;"></div>
<div style="left:1808.00px;top:78.00px;width:42.50px;height:807.30px;background:#E6E7E8;"></div>
<div style="left:1855.20px;top:78.00px;width:14.80px;height:79.20px;background:#FCE86A;"></div>
<div style="left:1897.50px;top:117.50px;width:1584.50px;height:40.80px;background:transparent;box-sizing:border-box;border:4.8px solid #EAEAEA;"></div>
<div style="left:1902.30px;top:83.68px;font-family:'Liberation Mono',monospace;font-size:29.2px;line-height:33.58px;color:#000;white-space:pre;"><span style="color:#0000FF">select</span> <span style="color:#808080">*</span> <span style="color:#0000FF">From</span> AdventureWorks2017_Test<span style="color:#808080">.</span>HumanResources<span style="color:#808080">.</span>Employee</div>
<div style="left:3485.30px;top:78.00px;width:42.00px;height:807.30px;background:#E8E8EC;"></div>
<div style="left:3485.30px;top:78.00px;width:42.00px;height:42.00px;background:#E4E9F7;box-sizing:border-box;border-left:2.2px solid #A5AEC0;border-bottom:2.4px solid #A5AEC0;"></div>
<svg style="left:3493.30px;top:82.00px" width="30.00" height="34.00" viewBox="0 0 30.00 34.00"><path d="M1 14.6 H28 M1 19.6 H28" stroke="#22262E" stroke-width="2.4"/><path d="M13.9 4.5 V14.6 M13.9 19.6 V29" stroke="#22262E" stroke-width="2.6"/><polygon points="10,6.5 17.8,6.5 13.9,1" fill="#22262E"/><polygon points="10,27.5 17.8,27.5 13.9,33" fill="#22262E"/></svg>
<svg style="left:3495.30px;top:135.60px" width="22.40" height="12.30" viewBox="0 0 22.40 12.30"><polygon points="0,12.300000000000011 22.40000000000009,12.300000000000011 11.200000000000045,0" fill="#868999"/></svg>
<div style="left:3498.30px;top:162.80px;width:19.20px;height:642.60px;background:#C2C3C9;"></div>
<div style="left:3485.30px;top:205.30px;width:42.00px;height:5.70px;background:#0000E6;"></div>
<div style="left:3487.80px;top:157.30px;width:9.80px;height:73.70px;background:#FCE86A;"></div>
<svg style="left:3495.30px;top:857.20px" width="22.40" height="14.00" viewBox="0 0 22.40 14.00"><polygon points="0,0 22.40000000000009,0 11.200000000000045,14.0" fill="#868999"/></svg>
<div style="left:1808.00px;top:885.30px;width:1719.30px;height:42.30px;background:#E8E8EC;"></div>
<div style="left:1808.00px;top:886.00px;width:149.00px;height:41.70px;background:#FCFCFD;box-sizing:border-box;border:2.3px solid #CCD0DD;"></div>
<div style="left:1813.50px;top:891.91px;font-family:'Liberation Sans',sans-serif;font-size:28.5px;line-height:32.77px;color:#1E1E1E;white-space:pre;transform:scaleX(0.99);transform-origin:0 0;">100 %</div>
<svg style="left:1936.00px;top:904.80px" width="14.60" height="8.40" viewBox="0 0 14.60 8.40"><polygon points="0,0 14.599999999999909,0 7.2999999999999545,8.400000000000091" fill="#1E2433"/></svg>
<svg style="left:1973.00px;top:895.50px" width="13.00" height="23.00" viewBox="0 0 13.00 23.00"><polygon points="13,0 13,23.0 0,11.5" fill="#868999"/></svg>
<div style="left:2000.30px;top:895.30px;width:1436.60px;height:22.20px;background:#C2C3C9;"></div>
<svg style="left:3457.30px;top:895.30px" width="13.20" height="23.70" viewBox="0 0 13.20 23.70"><polygon points="0,0 0,23.700000000000045 13.199999999999818,11.850000000000023" fill="#868999"/></svg>
<div style="left:1808.00px;top:927.60px;width:1719.30px;height:67.40px;background:#F0F0F0;"></div>
<div style="left:1808.00px;top:995.00px;width:1719.30px;height:720.00px;background:#FFFFFF;"></div>
<div style="left:1808.00px;top:938.60px;width:180.50px;height:56.40px;background:#FFFFFF;box-sizing:border-box;border-top:2px solid #DADCE3;"></div>
<div style="left:1988.50px;top:943.60px;width:196.50px;height:48.40px;background:#F0F0F0;box-sizing:border-box;border:2px solid #DDDDE0;border-bottom:none;"></div>
<svg style="left:1833.00px;top:947.80px" width="32.50" height="30.00" viewBox="0 0 32.50 30.00"><rect x="0" y="0" width="32.5" height="30" fill="#424242"/><rect x="2.2" y="7.6" width="8" height="5.4" fill="#FFFFFF"/><rect x="12.2" y="7.6" width="8" height="5.4" fill="#FFFFFF"/><rect x="22.2" y="7.6" width="8" height="5.4" fill="#FFFFFF"/><rect x="2.2" y="15.05" width="8" height="5.4" fill="#FFFFFF"/><rect x="12.2" y="15.05" width="8" height="5.4" fill="#FFFFFF"/><rect x="22.2" y="15.05" width="8" height="5.4" fill="#FFFFFF"/><rect x="2.2" y="22.5" width="8" height="5.4" fill="#FFFFFF"/><rect x="12.2" y="22.5" width="8" height="5.4" fill="#FFFFFF"/><rect x="22.2" y="22.5" width="8" height="5.4" fill="#FFFFFF"/></svg>
<div style="left:1881.00px;top:947.09px;font-family:'Liberation Sans',sans-serif;font-size:31.5px;line-height:36.22px;color:#1E1E1E;white-space:pre;transform:scaleX(0.833);transform-origin:0 0;">Results</div>
<svg style="left:2002.80px;top:950.20px" width="36.00" height="36.00" viewBox="0 0 36.00 36.00"><rect x="18" y="0" width="17.2" height="27.5" fill="#424242"/><rect x="20.6" y="3" width="12.2" height="2.2" fill="#F0F0F0"/><rect x="20.6" y="8.1" width="12.2" height="2.2" fill="#F0F0F0"/><circle cx="31.6" cy="24" r="1.6" fill="#F0F0F0"/><path d="M-0.5 9.2 H13 L20.6 16.8 V36.3 H-0.5 Z" fill="#F0F0F0"/><path d="M1.2 10.9 H12.3 L18.9 17.5 V34.6 H1.2 Z" fill="#FFFFFF" stroke="#424242" stroke-width="2.4"/><path d="M12.3 10.9 V17.5 H18.9" fill="#424242"/><path d="M5 19.2 H10.5 M5 24.2 H14.5 M5 29.2 H14.5" stroke="#424242" stroke-width="1.8"/></svg>
<div style="left:2053.80px;top:951.99px;font-family:'Liberation Sans',sans-serif;font-size:31.5px;line-height:36.22px;color:#1E1E1E;white-space:pre;transform:scaleX(0.834);transform-origin:0 0;">Messages</div>
<div style="left:3521.30px;top:992.00px;width:3.00px;height:723.00px;background:#E2E2E6;"></div>
<div style="left:1808.00px;top:1712.60px;width:1716.30px;height:2.20px;background:#E2E2E6;"></div>
<div style="left:1806.00px;top:1714.80px;width:1723.20px;height:3.90px;background:#F6F6F4;"></div>
<div style="left:1806.00px;top:1718.70px;width:1723.20px;height:4.30px;background:#F2E9A4;"></div>
<div style="left:1818.00px;top:995.40px;width:1699.70px;height:712.20px;background:#FFFFFF;"></div>
<div style="left:2396.30px;top:1043.20px;width:261.90px;height:618.15px;background:#A6CEF2;"></div>
<div style="left:2658.20px;top:1043.20px;width:505.90px;height:47.55px;background:#FFFFE1;"></div>
<div style="left:1820.30px;top:1042.20px;width:1653.00px;height:2.00px;background:#EEEEEE;"></div>
<div style="left:1820.30px;top:1089.75px;width:1653.00px;height:2.00px;background:#EEEEEE;"></div>
<div style="left:1820.30px;top:1137.30px;width:1653.00px;height:2.00px;background:#EEEEEE;"></div>
<div style="left:1820.30px;top:1184.85px;width:1653.00px;height:2.00px;background:#EEEEEE;"></div>
<div style="left:1820.30px;top:1232.40px;width:1653.00px;height:2.00px;background:#EEEEEE;"></div>
<div style="left:1820.30px;top:1279.95px;width:1653.00px;height:2.00px;background:#EEEEEE;"></div>
<div style="left:1820.30px;top:1327.50px;width:1653.00px;height:2.00px;background:#EEEEEE;"></div>
<div style="left:1820.30px;top:1375.05px;width:1653.00px;height:2.00px;background:#EEEEEE;"></div>
<div style="left:1820.30px;top:1422.60px;width:1653.00px;height:2.00px;background:#EEEEEE;"></div>
<div style="left:1820.30px;top:1470.15px;width:1653.00px;height:2.00px;background:#EEEEEE;"></div>
<div style="left:1820.30px;top:1517.70px;width:1653.00px;height:2.00px;background:#EEEEEE;"></div>
<div style="left:1820.30px;top:1565.25px;width:1653.00px;height:2.00px;background:#EEEEEE;"></div>
<div style="left:1820.30px;top:1612.80px;width:1653.00px;height:2.00px;background:#EEEEEE;"></div>
<div style="left:1820.30px;top:1660.35px;width:1653.00px;height:2.00px;background:#EEEEEE;"></div>
<div style="left:1897.50px;top:997.70px;width:2.00px;height:663.65px;background:#EEEEEE;"></div>
<div style="left:2137.00px;top:997.70px;width:2.00px;height:663.65px;background:#EEEEEE;"></div>
<div style="left:2395.30px;top:997.70px;width:2.00px;height:663.65px;background:#EEEEEE;"></div>
<div style="left:2657.20px;top:997.70px;width:2.00px;height:663.65px;background:#EEEEEE;"></div>
<div style="left:2909.80px;top:997.70px;width:2.00px;height:663.65px;background:#EEEEEE;"></div>
<div style="left:3163.10px;top:997.70px;width:2.00px;height:663.65px;background:#EEEEEE;"></div>
<div style="left:1898.50px;top:997.70px;width:239.50px;height:663.65px;overflow:hidden"><div style="left:13.00px;top:5.65px;font-family:'Liberation Sans',sans-serif;font-size:30px;line-height:34px;color:#000;white-space:pre;transform:scaleX(0.885);transform-origin:0 0">BusinessEntityID</div></div>
<div style="left:2138.00px;top:997.70px;width:258.30px;height:663.65px;overflow:hidden"><div style="left:13.00px;top:5.65px;font-family:'Liberation Sans',sans-serif;font-size:30px;line-height:34px;color:#000;white-space:pre;transform:scaleX(0.885);transform-origin:0 0">NationalIDNumber</div></div>
<div style="left:2396.30px;top:997.70px;width:261.90px;height:663.65px;overflow:hidden"><div style="left:13.00px;top:5.65px;font-family:'Liberation Sans',sans-serif;font-size:30px;line-height:34px;color:#000;white-space:pre;transform:scaleX(0.885);transform-origin:0 0">LoginID</div></div>
<div style="left:2658.20px;top:997.70px;width:252.60px;height:663.65px;overflow:hidden"><div style="left:13.00px;top:5.65px;font-family:'Liberation Sans',sans-serif;font-size:30px;line-height:34px;color:#000;white-space:pre;transform:scaleX(0.885);transform-origin:0 0">OrganizationNode</div></div>
<div style="left:2910.80px;top:997.70px;width:253.30px;height:663.65px;overflow:hidden"><div style="left:13.00px;top:5.65px;font-family:'Liberation Sans',sans-serif;font-size:30px;line-height:34px;color:#000;white-space:pre;transform:scaleX(0.885);transform-origin:0 0">OrganizationLevel</div></div>
<div style="left:3164.10px;top:997.70px;width:309.20px;height:663.65px;overflow:hidden"><div style="left:13.00px;top:5.65px;font-family:'Liberation Sans',sans-serif;font-size:30px;line-height:34px;color:#000;white-space:pre;transform:scaleX(0.885);transform-origin:0 0">JobTitle</div></div>
<div style="left:1820.30px;top:997.70px;width:78.20px;height:663.65px;overflow:hidden"><div style="left:15.00px;top:53.15px;font-family:'Liberation Sans',sans-serif;font-size:30px;line-height:34px;color:#000;white-space:pre;transform:scaleX(0.885);transform-origin:0 0">1</div></div>
<div style="left:1898.50px;top:997.70px;width:239.50px;height:663.65px;overflow:hidden"><div style="left:18.00px;top:53.15px;font-family:'Liberation Sans',sans-serif;font-size:30px;line-height:34px;color:#000;white-space:pre;transform:scaleX(0.885);transform-origin:0 0">1</div></div>
<div style="left:2138.00px;top:997.70px;width:258.30px;height:663.65px;overflow:hidden"><div style="left:18.00px;top:53.15px;font-family:'Liberation Sans',sans-serif;font-size:30px;line-height:34px;color:#000;white-space:pre;transform:scaleX(0.885);transform-origin:0 0">295847284</div></div>
<div style="left:2396.30px;top:997.70px;width:261.90px;height:663.65px;overflow:hidden"><div style="left:18.00px;top:53.15px;font-family:'Liberation Sans',sans-serif;font-size:30px;line-height:34px;color:#000;white-space:pre;transform:scaleX(0.885);transform-origin:0 0">Incorrect<span style="position:static;display:inline-block;margin:0 4.8px 0 4px;transform:scaleX(1.45);transform-origin:0 0">\</span>ken0</div></div>
<div style="left:2658.20px;top:997.70px;width:252.60px;height:663.65px;overflow:hidden"><div style="left:18.00px;top:53.15px;font-family:'Liberation Sans',sans-serif;font-size:30px;line-height:34px;color:#000;white-space:pre;transform:scaleX(0.885);transform-origin:0 0">NULL</div></div>
<div style="left:2910.80px;top:997.70px;width:253.30px;height:663.65px;overflow:hidden"><div style="left:18.00px;top:53.15px;font-family:'Liberation Sans',sans-serif;font-size:30px;line-height:34px;color:#000;white-space:pre;transform:scaleX(0.885);transform-origin:0 0">NULL</div></div>
<div style="left:3164.10px;top:997.70px;width:309.20px;height:663.65px;overflow:hidden"><div style="left:18.00px;top:53.15px;font-family:'Liberation Sans',sans-serif;font-size:30px;line-height:34px;color:#000;white-space:pre;transform:scaleX(0.885);transform-origin:0 0">Chief Executive Officer</div></div>
<div style="left:1820.30px;top:997.70px;width:78.20px;height:663.65px;overflow:hidden"><div style="left:15.00px;top:100.70px;font-family:'Liberation Sans',sans-serif;font-size:30px;line-height:34px;color:#000;white-space:pre;transform:scaleX(0.885);transform-origin:0 0">2</div></div>
<div style="left:1898.50px;top:997.70px;width:239.50px;height:663.65px;overflow:hidden"><div style="left:18.00px;top:100.70px;font-family:'Liberation Sans',sans-serif;font-size:30px;line-height:34px;color:#000;white-space:pre;transform:scaleX(0.885);transform-origin:0 0">2</div></div>
<div style="left:2138.00px;top:997.70px;width:258.30px;height:663.65px;overflow:hidden"><div style="left:18.00px;top:100.70px;font-family:'Liberation Sans',sans-serif;font-size:30px;line-height:34px;color:#000;white-space:pre;transform:scaleX(0.885);transform-origin:0 0">245797967</div></div>
<div style="left:2396.30px;top:997.70px;width:261.90px;height:663.65px;overflow:hidden"><div style="left:18.00px;top:100.70px;font-family:'Liberation Sans',sans-serif;font-size:30px;line-height:34px;color:#000;white-space:pre;transform:scaleX(0.885);transform-origin:0 0">Incorrect<span style="position:static;display:inline-block;margin:0 4.8px 0 4px;transform:scaleX(1.45);transform-origin:0 0">\</span>terri0</div></div>
<div style="left:2658.20px;top:997.70px;width:252.60px;height:663.65px;overflow:hidden"><div style="left:18.00px;top:100.70px;font-family:'Liberation Sans',sans-serif;font-size:30px;line-height:34px;color:#000;white-space:pre;transform:scaleX(0.885);transform-origin:0 0">0x58</div></div>
<div style="left:2910.80px;top:997.70px;width:253.30px;height:663.65px;overflow:hidden"><div style="left:18.00px;top:100.70px;font-family:'Liberation Sans',sans-serif;font-size:30px;line-height:34px;color:#000;white-space:pre;transform:scaleX(0.885);transform-origin:0 0">1</div></div>
<div style="left:3164.10px;top:997.70px;width:309.20px;height:663.65px;overflow:hidden"><div style="left:18.00px;top:100.70px;font-family:'Liberation Sans',sans-serif;font-size:30px;line-height:34px;color:#000;white-space:pre;transform:scaleX(0.885);transform-origin:0 0">Vice President of Engineering</div></div>
<div style="left:1820.30px;top:997.70px;width:78.20px;height:663.65px;overflow:hidden"><div style="left:15.00px;top:148.25px;font-family:'Liberation Sans',sans-serif;font-size:30px;line-height:34px;color:#000;white-space:pre;transform:scaleX(0.885);transform-origin:0 0">3</div></div>
<div style="left:1898.50px;top:997.70px;width:239.50px;height:663.65px;overflow:hidden"><div style="left:18.00px;top:148.25px;font-family:'Liberation Sans',sans-serif;font-size:30px;line-height:34px;color:#000;white-space:pre;transform:scaleX(0.885);transform-origin:0 0">3</div></div>
<div style="left:2138.00px;top:997.70px;width:258.30px;height:663.65px;overflow:hidden"><div style="left:18.00px;top:148.25px;font-family:'Liberation Sans',sans-serif;font-size:30px;line-height:34px;color:#000;white-space:pre;transform:scaleX(0.885);transform-origin:0 0">509647174</div></div>
<div style="left:2396.30px;top:997.70px;width:261.90px;height:663.65px;overflow:hidden"><div style="left:18.00px;top:148.25px;font-family:'Liberation Sans',sans-serif;font-size:30px;line-height:34px;color:#000;white-space:pre;transform:scaleX(0.885);transform-origin:0 0">Incorrect<span style="position:static;display:inline-block;margin:0 4.8px 0 4px;transform:scaleX(1.45);transform-origin:0 0">\</span>roberto0</div></div>
<div style="left:2658.20px;top:997.70px;width:252.60px;height:663.65px;overflow:hidden"><div style="left:18.00px;top:148.25px;font-family:'Liberation Sans',sans-serif;font-size:30px;line-height:34px;color:#000;white-space:pre;transform:scaleX(0.885);transform-origin:0 0">0x5AC0</div></div>
<div style="left:2910.80px;top:997.70px;width:253.30px;height:663.65px;overflow:hidden"><div style="left:18.00px;top:148.25px;font-family:'Liberation Sans',sans-serif;font-size:30px;line-height:34px;color:#000;white-space:pre;transform:scaleX(0.885);transform-origin:0 0">2</div></div>
<div style="left:3164.10px;top:997.70px;width:309.20px;height:663.65px;overflow:hidden"><div style="left:18.00px;top:148.25px;font-family:'Liberation Sans',sans-serif;font-size:30px;line-height:34px;color:#000;white-space:pre;transform:scaleX(0.885);transform-origin:0 0">Engineering Manager</div></div>
<div style="left:1820.30px;top:997.70px;width:78.20px;height:663.65px;overflow:hidden"><div style="left:15.00px;top:195.80px;font-family:'Liberation Sans',sans-serif;font-size:30px;line-height:34px;color:#000;white-space:pre;transform:scaleX(0.885);transform-origin:0 0">4</div></div>
<div style="left:1898.50px;top:997.70px;width:239.50px;height:663.65px;overflow:hidden"><div style="left:18.00px;top:195.80px;font-family:'Liberation Sans',sans-serif;font-size:30px;line-height:34px;color:#000;white-space:pre;transform:scaleX(0.885);transform-origin:0 0">4</div></div>
<div style="left:2138.00px;top:997.70px;width:258.30px;height:663.65px;overflow:hidden"><div style="left:18.00px;top:195.80px;font-family:'Liberation Sans',sans-serif;font-size:30px;line-height:34px;color:#000;white-space:pre;transform:scaleX(0.885);transform-origin:0 0">112457891</div></div>
<div style="left:2396.30px;top:997.70px;width:261.90px;height:663.65px;overflow:hidden"><div style="left:18.00px;top:195.80px;font-family:'Liberation Sans',sans-serif;font-size:30px;line-height:34px;color:#000;white-space:pre;transform:scaleX(0.885);transform-origin:0 0">Incorrect<span style="position:static;display:inline-block;margin:0 4.8px 0 4px;transform:scaleX(1.45);transform-origin:0 0">\</span>rob0</div></div>
<div style="left:2658.20px;top:997.70px;width:252.60px;height:663.65px;overflow:hidden"><div style="left:18.00px;top:195.80px;font-family:'Liberation Sans',sans-serif;font-size:30px;line-height:34px;color:#000;white-space:pre;transform:scaleX(0.885);transform-origin:0 0">0x5AD6</div></div>
<div style="left:2910.80px;top:997.70px;width:253.30px;height:663.65px;overflow:hidden"><div style="left:18.00px;top:195.80px;font-family:'Liberation Sans',sans-serif;font-size:30px;line-height:34px;color:#000;white-space:pre;transform:scaleX(0.885);transform-origin:0 0">3</div></div>
<div style="left:3164.10px;top:997.70px;width:309.20px;height:663.65px;overflow:hidden"><div style="left:18.00px;top:195.80px;font-family:'Liberation Sans',sans-serif;font-size:30px;line-height:34px;color:#000;white-space:pre;transform:scaleX(0.885);transform-origin:0 0">Senior Tool Designer</div></div>
<div style="left:1820.30px;top:997.70px;width:78.20px;height:663.65px;overflow:hidden"><div style="left:15.00px;top:243.35px;font-family:'Liberation Sans',sans-serif;font-size:30px;line-height:34px;color:#000;white-space:pre;transform:scaleX(0.885);transform-origin:0 0">5</div></div>
<div style="left:1898.50px;top:997.70px;width:239.50px;height:663.65px;overflow:hidden"><div style="left:18.00px;top:243.35px;font-family:'Liberation Sans',sans-serif;font-size:30px;line-height:34px;color:#000;white-space:pre;transform:scaleX(0.885);transform-origin:0 0">5</div></div>
<div style="left:2138.00px;top:997.70px;width:258.30px;height:663.65px;overflow:hidden"><div style="left:18.00px;top:243.35px;font-family:'Liberation Sans',sans-serif;font-size:30px;line-height:34px;color:#000;white-space:pre;transform:scaleX(0.885);transform-origin:0 0">695256908</div></div>
<div style="left:2396.30px;top:997.70px;width:261.90px;height:663.65px;overflow:hidden"><div style="left:18.00px;top:243.35px;font-family:'Liberation Sans',sans-serif;font-size:30px;line-height:34px;color:#000;white-space:pre;transform:scaleX(0.885);transform-origin:0 0">Incorrect<span style="position:static;display:inline-block;margin:0 4.8px 0 4px;transform:scaleX(1.45);transform-origin:0 0">\</span>gail0</div></div>
<div style="left:2658.20px;top:997.70px;width:252.60px;height:663.65px;overflow:hidden"><div style="left:18.00px;top:243.35px;font-family:'Liberation Sans',sans-serif;font-size:30px;line-height:34px;color:#000;white-space:pre;transform:scaleX(0.885);transform-origin:0 0">0x5ADA</div></div>
<div style="left:2910.80px;top:997.70px;width:253.30px;height:663.65px;overflow:hidden"><div style="left:18.00px;top:243.35px;font-family:'Liberation Sans',sans-serif;font-size:30px;line-height:34px;color:#000;white-space:pre;transform:scaleX(0.885);transform-origin:0 0">3</div></div>
<div style="left:3164.10px;top:997.70px;width:309.20px;height:663.65px;overflow:hidden"><div style="left:18.00px;top:243.35px;font-family:'Liberation Sans',sans-serif;font-size:30px;line-height:34px;color:#000;white-space:pre;transform:scaleX(0.885);transform-origin:0 0">Design Engineer</div></div>
<div style="left:1820.30px;top:997.70px;width:78.20px;height:663.65px;overflow:hidden"><div style="left:15.00px;top:290.90px;font-family:'Liberation Sans',sans-serif;font-size:30px;line-height:34px;color:#000;white-space:pre;transform:scaleX(0.885);transform-origin:0 0">6</div></div>
<div style="left:1898.50px;top:997.70px;width:239.50px;height:663.65px;overflow:hidden"><div style="left:18.00px;top:290.90px;font-family:'Liberation Sans',sans-serif;font-size:30px;line-height:34px;color:#000;white-space:pre;transform:scaleX(0.885);transform-origin:0 0">6</div></div>
<div style="left:2138.00px;top:997.70px;width:258.30px;height:663.65px;overflow:hidden"><div style="left:18.00px;top:290.90px;font-family:'Liberation Sans',sans-serif;font-size:30px;line-height:34px;color:#000;white-space:pre;transform:scaleX(0.885);transform-origin:0 0">998320692</div></div>
<div style="left:2396.30px;top:997.70px;width:261.90px;height:663.65px;overflow:hidden"><div style="left:18.00px;top:290.90px;font-family:'Liberation Sans',sans-serif;font-size:30px;line-height:34px;color:#000;white-space:pre;transform:scaleX(0.885);transform-origin:0 0">Incorrect<span style="position:static;display:inline-block;margin:0 4.8px 0 4px;transform:scaleX(1.45);transform-origin:0 0">\</span>jossef0</div></div>
<div style="left:2658.20px;top:997.70px;width:252.60px;height:663.65px;overflow:hidden"><div style="left:18.00px;top:290.90px;font-family:'Liberation Sans',sans-serif;font-size:30px;line-height:34px;color:#000;white-space:pre;transform:scaleX(0.885);transform-origin:0 0">0x5ADE</div></div>
<div style="left:2910.80px;top:997.70px;width:253.30px;height:663.65px;overflow:hidden"><div style="left:18.00px;top:290.90px;font-family:'Liberation Sans',sans-serif;font-size:30px;line-height:34px;color:#000;white-space:pre;transform:scaleX(0.885);transform-origin:0 0">3</div></div>
<div style="left:3164.10px;top:997.70px;width:309.20px;height:663.65px;overflow:hidden"><div style="left:18.00px;top:290.90px;font-family:'Liberation Sans',sans-serif;font-size:30px;line-height:34px;color:#000;white-space:pre;transform:scaleX(0.885);transform-origin:0 0">Design Engineer</div></div>
<div style="left:1820.30px;top:997.70px;width:78.20px;height:663.65px;overflow:hidden"><div style="left:15.00px;top:338.45px;font-family:'Liberation Sans',sans-serif;font-size:30px;line-height:34px;color:#000;white-space:pre;transform:scaleX(0.885);transform-origin:0 0">7</div></div>
<div style="left:1898.50px;top:997.70px;width:239.50px;height:663.65px;overflow:hidden"><div style="left:18.00px;top:338.45px;font-family:'Liberation Sans',sans-serif;font-size:30px;line-height:34px;color:#000;white-space:pre;transform:scaleX(0.885);transform-origin:0 0">7</div></div>
<div style="left:2138.00px;top:997.70px;width:258.30px;height:663.65px;overflow:hidden"><div style="left:18.00px;top:338.45px;font-family:'Liberation Sans',sans-serif;font-size:30px;line-height:34px;color:#000;white-space:pre;transform:scaleX(0.885);transform-origin:0 0">134969118</div></div>
<div style="left:2396.30px;top:997.70px;width:261.90px;height:663.65px;overflow:hidden"><div style="left:18.00px;top:338.45px;font-family:'Liberation Sans',sans-serif;font-size:30px;line-height:34px;color:#000;white-space:pre;transform:scaleX(0.885);transform-origin:0 0">Incorrect<span style="position:static;display:inline-block;margin:0 4.8px 0 4px;transform:scaleX(1.45);transform-origin:0 0">\</span>dylan0</div></div>
<div style="left:2658.20px;top:997.70px;width:252.60px;height:663.65px;overflow:hidden"><div style="left:18.00px;top:338.45px;font-family:'Liberation Sans',sans-serif;font-size:30px;line-height:34px;color:#000;white-space:pre;transform:scaleX(0.885);transform-origin:0 0">0x5AE1</div></div>
<div style="left:2910.80px;top:997.70px;width:253.30px;height:663.65px;overflow:hidden"><div style="left:18.00px;top:338.45px;font-family:'Liberation Sans',sans-serif;font-size:30px;line-height:34px;color:#000;white-space:pre;transform:scaleX(0.885);transform-origin:0 0">3</div></div>
<div style="left:3164.10px;top:997.70px;width:309.20px;height:663.65px;overflow:hidden"><div style="left:18.00px;top:338.45px;font-family:'Liberation Sans',sans-serif;font-size:30px;line-height:34px;color:#000;white-space:pre;transform:scaleX(0.885);transform-origin:0 0">Research and Development Manager</div></div>
<div style="left:1820.30px;top:997.70px;width:78.20px;height:663.65px;overflow:hidden"><div style="left:15.00px;top:386.00px;font-family:'Liberation Sans',sans-serif;font-size:30px;line-height:34px;color:#000;white-space:pre;transform:scaleX(0.885);transform-origin:0 0">8</div></div>
<div style="left:1898.50px;top:997.70px;width:239.50px;height:663.65px;overflow:hidden"><div style="left:18.00px;top:386.00px;font-family:'Liberation Sans',sans-serif;font-size:30px;line-height:34px;color:#000;white-space:pre;transform:scaleX(0.885);transform-origin:0 0">8</div></div>
<div style="left:2138.00px;top:997.70px;width:258.30px;height:663.65px;overflow:hidden"><div style="left:18.00px;top:386.00px;font-family:'Liberation Sans',sans-serif;font-size:30px;line-height:34px;color:#000;white-space:pre;transform:scaleX(0.885);transform-origin:0 0">811994146</div></div>
<div style="left:2396.30px;top:997.70px;width:261.90px;height:663.65px;overflow:hidden"><div style="left:18.00px;top:386.00px;font-family:'Liberation Sans',sans-serif;font-size:30px;line-height:34px;color:#000;white-space:pre;transform:scaleX(0.885);transform-origin:0 0">Incorrect<span style="position:static;display:inline-block;margin:0 4.8px 0 4px;transform:scaleX(1.45);transform-origin:0 0">\</span>diane1</div></div>
<div style="left:2658.20px;top:997.70px;width:252.60px;height:663.65px;overflow:hidden"><div style="left:18.00px;top:386.00px;font-family:'Liberation Sans',sans-serif;font-size:30px;line-height:34px;color:#000;white-space:pre;transform:scaleX(0.885);transform-origin:0 0">0x5AE158</div></div>
<div style="left:2910.80px;top:997.70px;width:253.30px;height:663.65px;overflow:hidden"><div style="left:18.00px;top:386.00px;font-family:'Liberation Sans',sans-serif;font-size:30px;line-height:34px;color:#000;white-space:pre;transform:scaleX(0.885);transform-origin:0 0">4</div></div>
<div style="left:3164.10px;top:997.70px;width:309.20px;height:663.65px;overflow:hidden"><div style="left:18.00px;top:386.00px;font-family:'Liberation Sans',sans-serif;font-size:30px;line-height:34px;color:#000;white-space:pre;transform:scaleX(0.885);transform-origin:0 0">Research and Development Engineer</div></div>
<div style="left:1820.30px;top:997.70px;width:78.20px;height:663.65px;overflow:hidden"><div style="left:15.00px;top:433.55px;font-family:'Liberation Sans',sans-serif;font-size:30px;line-height:34px;color:#000;white-space:pre;transform:scaleX(0.885);transform-origin:0 0">9</div></div>
<div style="left:1898.50px;top:997.70px;width:239.50px;height:663.65px;overflow:hidden"><div style="left:18.00px;top:433.55px;font-family:'Liberation Sans',sans-serif;font-size:30px;line-height:34px;color:#000;white-space:pre;transform:scaleX(0.885);transform-origin:0 0">9</div></div>
<div style="left:2138.00px;top:997.70px;width:258.30px;height:663.65px;overflow:hidden"><div style="left:18.00px;top:433.55px;font-family:'Liberation Sans',sans-serif;font-size:30px;line-height:34px;color:#000;white-space:pre;transform:scaleX(0.885);transform-origin:0 0">658797903</div></div>
<div style="left:2396.30px;top:997.70px;width:261.90px;height:663.65px;overflow:hidden"><div style="left:18.00px;top:433.55px;font-family:'Liberation Sans',sans-serif;font-size:30px;line-height:34px;color:#000;white-space:pre;transform:scaleX(0.885);transform-origin:0 0">Incorrect<span style="position:static;display:inline-block;margin:0 4.8px 0 4px;transform:scaleX(1.45);transform-origin:0 0">\</span>gigi0</div></div>
<div style="left:2658.20px;top:997.70px;width:252.60px;height:663.65px;overflow:hidden"><div style="left:18.00px;top:433.55px;font-family:'Liberation Sans',sans-serif;font-size:30px;line-height:34px;color:#000;white-space:pre;transform:scaleX(0.885);transform-origin:0 0">0x5AE168</div></div>
<div style="left:2910.80px;top:997.70px;width:253.30px;height:663.65px;overflow:hidden"><div style="left:18.00px;top:433.55px;font-family:'Liberation Sans',sans-serif;font-size:30px;line-height:34px;color:#000;white-space:pre;transform:scaleX(0.885);transform-origin:0 0">4</div></div>
<div style="left:3164.10px;top:997.70px;width:309.20px;height:663.65px;overflow:hidden"><div style="left:18.00px;top:433.55px;font-family:'Liberation Sans',sans-serif;font-size:30px;line-height:34px;color:#000;white-space:pre;transform:scaleX(0.885);transform-origin:0 0">Research and Development Engineer</div></div>
<div style="left:1820.30px;top:997.70px;width:78.20px;height:663.65px;overflow:hidden"><div style="left:15.00px;top:481.10px;font-family:'Liberation Sans',sans-serif;font-size:30px;line-height:34px;color:#000;white-space:pre;transform:scaleX(0.885);transform-origin:0 0">10</div></div>
<div style="left:1898.50px;top:997.70px;width:239.50px;height:663.65px;overflow:hidden"><div style="left:18.00px;top:481.10px;font-family:'Liberation Sans',sans-serif;font-size:30px;line-height:34px;color:#000;white-space:pre;transform:scaleX(0.885);transform-origin:0 0">10</div></div>
<div style="left:2138.00px;top:997.70px;width:258.30px;height:663.65px;overflow:hidden"><div style="left:18.00px;top:481.10px;font-family:'Liberation Sans',sans-serif;font-size:30px;line-height:34px;color:#000;white-space:pre;transform:scaleX(0.885);transform-origin:0 0">879342154</div></div>
<div style="left:2396.30px;top:997.70px;width:261.90px;height:663.65px;overflow:hidden"><div style="left:18.00px;top:481.10px;font-family:'Liberation Sans',sans-serif;font-size:30px;line-height:34px;color:#000;white-space:pre;transform:scaleX(0.885);transform-origin:0 0">Incorrect<span style="position:static;display:inline-block;margin:0 4.8px 0 4px;transform:scaleX(1.45);transform-origin:0 0">\</span>michael6</div></div>
<div style="left:2658.20px;top:997.70px;width:252.60px;height:663.65px;overflow:hidden"><div style="left:18.00px;top:481.10px;font-family:'Liberation Sans',sans-serif;font-size:30px;line-height:34px;color:#000;white-space:pre;transform:scaleX(0.885);transform-origin:0 0">0x5AE178</div></div>
<div style="left:2910.80px;top:997.70px;width:253.30px;height:663.65px;overflow:hidden"><div style="left:18.00px;top:481.10px;font-family:'Liberation Sans',sans-serif;font-size:30px;line-height:34px;color:#000;white-space:pre;transform:scaleX(0.885);transform-origin:0 0">4</div></div>
<div style="left:3164.10px;top:997.70px;width:309.20px;height:663.65px;overflow:hidden"><div style="left:18.00px;top:481.10px;font-family:'Liberation Sans',sans-serif;font-size:30px;line-height:34px;color:#000;white-space:pre;transform:scaleX(0.885);transform-origin:0 0">Research and Development Manager</div></div>
<div style="left:1820.30px;top:997.70px;width:78.20px;height:663.65px;overflow:hidden"><div style="left:15.00px;top:528.65px;font-family:'Liberation Sans',sans-serif;font-size:30px;line-height:34px;color:#000;white-space:pre;transform:scaleX(0.885);transform-origin:0 0">11</div></div>
<div style="left:1898.50px;top:997.70px;width:239.50px;height:663.65px;overflow:hidden"><div style="left:18.00px;top:528.65px;font-family:'Liberation Sans',sans-serif;font-size:30px;line-height:34px;color:#000;white-space:pre;transform:scaleX(0.885);transform-origin:0 0">11</div></div>
<div style="left:2138.00px;top:997.70px;width:258.30px;height:663.65px;overflow:hidden"><div style="left:18.00px;top:528.65px;font-family:'Liberation Sans',sans-serif;font-size:30px;line-height:34px;color:#000;white-space:pre;transform:scaleX(0.885);transform-origin:0 0">974026903</div></div>
<div style="left:2396.30px;top:997.70px;width:261.90px;height:663.65px;overflow:hidden"><div style="left:18.00px;top:528.65px;font-family:'Liberation Sans',sans-serif;font-size:30px;line-height:34px;color:#000;white-space:pre;transform:scaleX(0.885);transform-origin:0 0">Incorrect<span style="position:static;display:inline-block;margin:0 4.8px 0 4px;transform:scaleX(1.45);transform-origin:0 0">\</span>ovidiu0</div></div>
<div style="left:2658.20px;top:997.70px;width:252.60px;height:663.65px;overflow:hidden"><div style="left:18.00px;top:528.65px;font-family:'Liberation Sans',sans-serif;font-size:30px;line-height:34px;color:#000;white-space:pre;transform:scaleX(0.885);transform-origin:0 0">0x5AE3</div></div>
<div style="left:2910.80px;top:997.70px;width:253.30px;height:663.65px;overflow:hidden"><div style="left:18.00px;top:528.65px;font-family:'Liberation Sans',sans-serif;font-size:30px;line-height:34px;color:#000;white-space:pre;transform:scaleX(0.885);transform-origin:0 0">3</div></div>
<div style="left:3164.10px;top:997.70px;width:309.20px;height:663.65px;overflow:hidden"><div style="left:18.00px;top:528.65px;font-family:'Liberation Sans',sans-serif;font-size:30px;line-height:34px;color:#000;white-space:pre;transform:scaleX(0.885);transform-origin:0 0">Senior Tool Designer</div></div>
<div style="left:1820.30px;top:997.70px;width:78.20px;height:663.65px;overflow:hidden"><div style="left:15.00px;top:576.20px;font-family:'Liberation Sans',sans-serif;font-size:30px;line-height:34px;color:#000;white-space:pre;transform:scaleX(0.885);transform-origin:0 0">12</div></div>
<div style="left:1898.50px;top:997.70px;width:239.50px;height:663.65px;overflow:hidden"><div style="left:18.00px;top:576.20px;font-family:'Liberation Sans',sans-serif;font-size:30px;line-height:34px;color:#000;white-space:pre;transform:scaleX(0.885);transform-origin:0 0">12</div></div>
<div style="left:2138.00px;top:997.70px;width:258.30px;height:663.65px;overflow:hidden"><div style="left:18.00px;top:576.20px;font-family:'Liberation Sans',sans-serif;font-size:30px;line-height:34px;color:#000;white-space:pre;transform:scaleX(0.885);transform-origin:0 0">480168528</div></div>
<div style="left:2396.30px;top:997.70px;width:261.90px;height:663.65px;overflow:hidden"><div style="left:18.00px;top:576.20px;font-family:'Liberation Sans',sans-serif;font-size:30px;line-height:34px;color:#000;white-space:pre;transform:scaleX(0.885);transform-origin:0 0">Incorrect<span style="position:static;display:inline-block;margin:0 4.8px 0 4px;transform:scaleX(1.45);transform-origin:0 0">\</span>thierry0</div></div>
<div style="left:2658.20px;top:997.70px;width:252.60px;height:663.65px;overflow:hidden"><div style="left:18.00px;top:576.20px;font-family:'Liberation Sans',sans-serif;font-size:30px;line-height:34px;color:#000;white-space:pre;transform:scaleX(0.885);transform-origin:0 0">0x5AE358</div></div>
<div style="left:2910.80px;top:997.70px;width:253.30px;height:663.65px;overflow:hidden"><div style="left:18.00px;top:576.20px;font-family:'Liberation Sans',sans-serif;font-size:30px;line-height:34px;color:#000;white-space:pre;transform:scaleX(0.885);transform-origin:0 0">4</div></div>
<div style="left:3164.10px;top:997.70px;width:309.20px;height:663.65px;overflow:hidden"><div style="left:18.00px;top:576.20px;font-family:'Liberation Sans',sans-serif;font-size:30px;line-height:34px;color:#000;white-space:pre;transform:scaleX(0.885);transform-origin:0 0">Tool Designer</div></div>
<div style="left:1820.30px;top:997.70px;width:78.20px;height:663.65px;overflow:hidden"><div style="left:15.00px;top:623.75px;font-family:'Liberation Sans',sans-serif;font-size:30px;line-height:34px;color:#000;white-space:pre;transform:scaleX(0.885);transform-origin:0 0">13</div></div>
<div style="left:1898.50px;top:997.70px;width:239.50px;height:663.65px;overflow:hidden"><div style="left:18.00px;top:623.75px;font-family:'Liberation Sans',sans-serif;font-size:30px;line-height:34px;color:#000;white-space:pre;transform:scaleX(0.885);transform-origin:0 0">13</div></div>
<div style="left:2138.00px;top:997.70px;width:258.30px;height:663.65px;overflow:hidden"><div style="left:18.00px;top:623.75px;font-family:'Liberation Sans',sans-serif;font-size:30px;line-height:34px;color:#000;white-space:pre;transform:scaleX(0.885);transform-origin:0 0">486228782</div></div>
<div style="left:2396.30px;top:997.70px;width:261.90px;height:663.65px;overflow:hidden"><div style="left:18.00px;top:623.75px;font-family:'Liberation Sans',sans-serif;font-size:30px;line-height:34px;color:#000;white-space:pre;transform:scaleX(0.885);transform-origin:0 0">Incorrect<span style="position:static;display:inline-block;margin:0 4.8px 0 4px;transform:scaleX(1.45);transform-origin:0 0">\</span>janice0</div></div>
<div style="left:2658.20px;top:997.70px;width:252.60px;height:663.65px;overflow:hidden"><div style="left:18.00px;top:623.75px;font-family:'Liberation Sans',sans-serif;font-size:30px;line-height:34px;color:#000;white-space:pre;transform:scaleX(0.885);transform-origin:0 0">0x5AE368</div></div>
<div style="left:2910.80px;top:997.70px;width:253.30px;height:663.65px;overflow:hidden"><div style="left:18.00px;top:623.75px;font-family:'Liberation Sans',sans-serif;font-size:30px;line-height:34px;color:#000;white-space:pre;transform:scaleX(0.885);transform-origin:0 0">4</div></div>
<div style="left:3164.10px;top:997.70px;width:309.20px;height:663.65px;overflow:hidden"><div style="left:18.00px;top:623.75px;font-family:'Liberation Sans',sans-serif;font-size:30px;line-height:34px;color:#000;white-space:pre;transform:scaleX(0.885);transform-origin:0 0">Tool Designer</div></div>
<div style="left:2394.90px;top:1043.00px;width:264.90px;height:48.95px;background:transparent;box-sizing:border-box;border:2.5px dotted #1E1E1E;"></div>
<div style="left:3473.30px;top:995.40px;width:44.40px;height:712.20px;background:#E8E8EC;"></div>
<svg style="left:3483.30px;top:1012.70px" width="22.80" height="12.30" viewBox="0 0 22.80 12.30"><polygon points="0,12.299999999999955 22.800000000000182,12.299999999999955 11.400000000000091,0" fill="#868999"/></svg>
<div style="left:3483.30px;top:1040.70px;width:23.00px;height:41.90px;background:#C2C3C9;"></div>
<svg style="left:3483.30px;top:1635.50px" width="22.80" height="12.30" viewBox="0 0 22.80 12.30"><polygon points="0,0 22.800000000000182,0 11.400000000000091,12.299999999999955" fill="#868999"/></svg>
<div style="left:1818.00px;top:1661.35px;width:1655.30px;height:46.25px;background:#E8E8EC;"></div>
<svg style="left:1835.60px;top:1672.60px" width="13.20" height="23.40" viewBox="0 0 13.20 23.40"><polygon points="13.200000000000045,0 13.200000000000045,23.40000000000009 0,11.700000000000045" fill="#868999"/></svg>
<div style="left:1862.50px;top:1673.00px;width:592.40px;height:22.30px;background:#C2C3C9;"></div>
<svg style="left:3445.80px;top:1672.50px" width="13.00" height="23.00" viewBox="0 0 13.00 23.00"><polygon points="0,0 0,23.0 13.0,11.5" fill="#868999"/></svg>
<div style="left:1818.00px;top:995.40px;width:1699.70px;height:712.20px;background:transparent;box-sizing:border-box;border:2.3px solid #B0B2B8;"></div>
</body></html>
